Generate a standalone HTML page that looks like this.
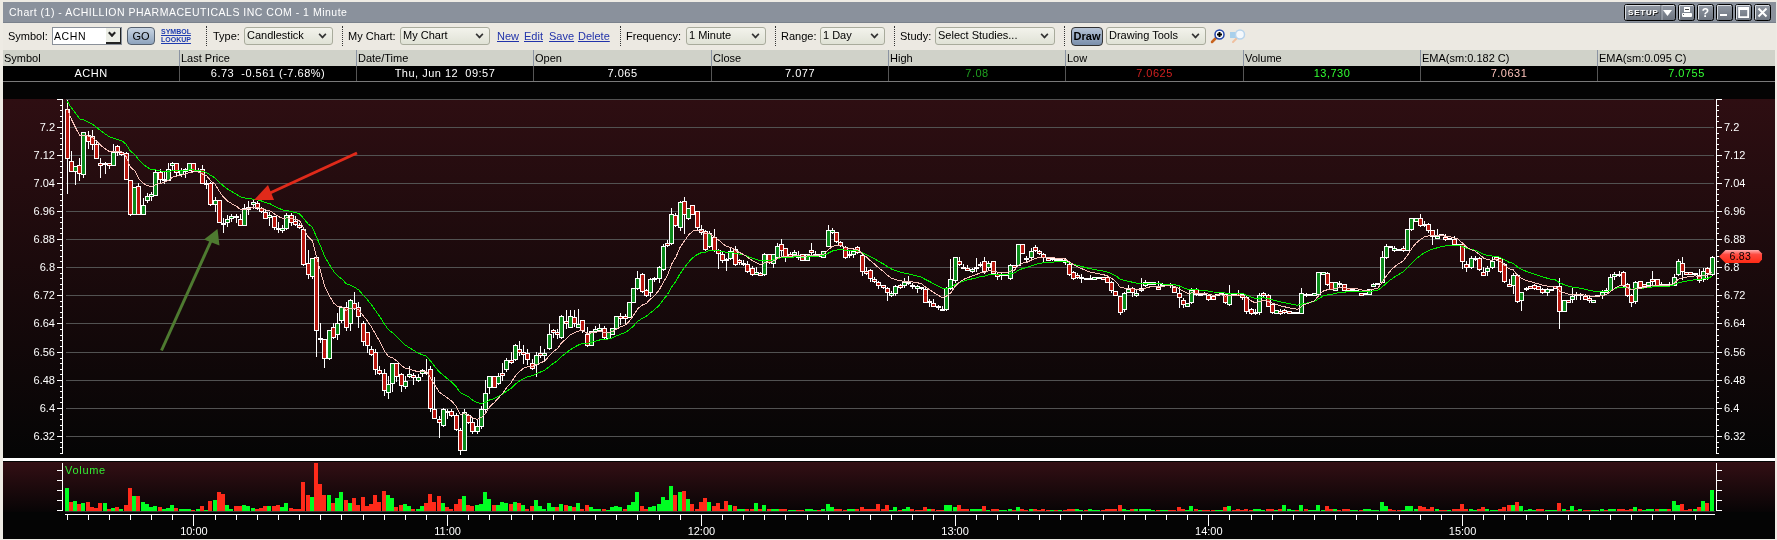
<!DOCTYPE html>
<html><head><meta charset="utf-8">
<style>
*{margin:0;padding:0;box-sizing:border-box}
html,body{width:1777px;height:540px;overflow:hidden;background:#eeebe4;font-family:"Liberation Sans", sans-serif;}
.abs{position:absolute}
#title{left:3px;top:2px;width:1773px;height:21px;background:#8a919c;color:#fff;font-size:10.5px;letter-spacing:0.5px;line-height:21px;padding-left:6px;white-space:nowrap;border-bottom:1px solid #7a818c}
#tb{left:3px;top:23px;width:1773px;height:27px;background:#ece9e2;font-size:11px;color:#000}
.lbl{position:absolute;top:0px;line-height:27px;white-space:nowrap}
.sel{position:absolute;top:4px;height:18px;border:1px solid #a9ab9c;border-radius:3px;background:linear-gradient(#f3f3ec,#e0e2d6);line-height:15px;padding-left:2px;white-space:nowrap}
.sel i{position:absolute;right:6px;top:3px;width:7px;height:7px;border-right:2px solid #333;border-bottom:2px solid #333;transform:rotate(45deg) scale(.8);transform-origin:center}
.sep{position:absolute;top:3px;height:20px;width:0;border-left:1px dotted #333}
.lnk{position:absolute;top:0;line-height:27px;color:#2233aa;text-decoration:underline;white-space:nowrap}
#hdr{left:3px;top:50px;width:1772px;height:16px;background:#d0d2c9;font-size:11px;}
#row{left:3px;top:66px;width:1772px;height:16px;background:#000;font-size:11px;color:#fff}
.hc{position:absolute;top:0;height:16px;border-left:1px solid #8a93a2;line-height:17px;padding-left:1px;white-space:nowrap}
.rc{position:absolute;top:0;height:15px;border-left:1px solid #555;line-height:15px;text-align:center;white-space:nowrap;letter-spacing:0.5px}
#root{position:absolute;left:0;top:0;width:1777px;height:540px;will-change:transform}
</style></head><body><div id="root">
<div class="abs" id="title">Chart (1) - ACHILLION PHARMACEUTICALS INC COM - 1 Minute</div>
<div class="abs" id="tb"><div class="lbl" style="left:5px">Symbol:</div><div class="abs" style="left:49px;top:4px;width:70px;height:18px;background:#fff;border:1px solid #8a9099;line-height:17px;padding-left:1px;font-size:10.5px;letter-spacing:0.6px">ACHN</div><div class="abs" style="left:103px;top:5px;width:15px;height:16px;background:#eceee6;border-bottom:2px solid #222;border-right:1px solid #222"><i style="position:absolute;left:2px;top:1px;width:8px;height:8px;border-right:3px solid #222;border-bottom:3px solid #222;transform:rotate(45deg) scale(.7)"></i></div><div class="abs" style="left:124px;top:4px;width:28px;height:18px;border:1px solid #55606e;border-radius:4px;background:linear-gradient(#c9d5e3,#8ea3bd);text-align:center;line-height:16px;font-size:11px">GO</div><div class="abs" style="left:158px;top:5px;font-size:7px;font-weight:bold;line-height:8px;color:#1d3bb0;text-decoration:underline">SYMBOL<br>LOOKUP</div><div class="sep" style="left:203px"></div><div class="sep" style="left:339px"></div><div class="sep" style="left:617px"></div><div class="sep" style="left:772px"></div><div class="sep" style="left:891px"></div><div class="sep" style="left:1061px"></div><div class="lbl" style="left:210px">Type:</div><div class="sel" style="left:241px;width:89px">Candlestick<i></i></div><div class="lbl" style="left:345px">My Chart:</div><div class="sel" style="left:397px;width:90px">My Chart<i></i></div><div class="lnk" style="left:494px">New</div><div class="lnk" style="left:521px">Edit</div><div class="lnk" style="left:546px">Save</div><div class="lnk" style="left:575px">Delete</div><div class="lbl" style="left:623px">Frequency:</div><div class="sel" style="left:683px;width:80px">1 Minute<i></i></div><div class="lbl" style="left:778px">Range:</div><div class="sel" style="left:817px;width:65px">1 Day<i></i></div><div class="lbl" style="left:897px">Study:</div><div class="sel" style="left:932px;width:120px">Select Studies...<i></i></div><div class="abs" style="left:1068px;top:4px;width:32px;height:19px;border:1px solid #333;border-radius:4px;background:linear-gradient(#b5c3d6,#7b8fab);text-align:center;line-height:17px;font-weight:bold;font-size:11px">Draw</div><div class="sel" style="left:1103px;width:100px">Drawing Tools<i></i></div></div>
<div class="abs" id="hdr"><div class="hc" style="left:0px;width:176px;border-left:none">Symbol</div><div class="hc" style="left:176px;width:177px;">Last Price</div><div class="hc" style="left:353px;width:177px;">Date/Time</div><div class="hc" style="left:530px;width:178px;">Open</div><div class="hc" style="left:708px;width:177px;">Close</div><div class="hc" style="left:885px;width:177px;">High</div><div class="hc" style="left:1062px;width:178px;">Low</div><div class="hc" style="left:1240px;width:177px;">Volume</div><div class="hc" style="left:1417px;width:177px;">EMA(sm:0.182 C)</div><div class="hc" style="left:1594px;width:178px;">EMA(sm:0.095 C)</div></div>
<div class="abs" id="row"><div class="rc" style="left:0px;width:176px;color:#fff;border-left:none">ACHN</div><div class="rc" style="left:176px;width:177px;color:#fff;">6.73&nbsp; -0.561 (-7.68%)</div><div class="rc" style="left:353px;width:177px;color:#fff;">Thu, Jun 12&nbsp; 09:57</div><div class="rc" style="left:530px;width:178px;color:#fff;">7.065</div><div class="rc" style="left:708px;width:177px;color:#fff;">7.077</div><div class="rc" style="left:885px;width:177px;color:#1fa01f;">7.08</div><div class="rc" style="left:1062px;width:178px;color:#d02020;">7.0625</div><div class="rc" style="left:1240px;width:177px;color:#33ff33;">13,730</div><div class="rc" style="left:1417px;width:177px;color:#ffc4bc;">7.0631</div><div class="rc" style="left:1594px;width:178px;color:#33ff33;">7.0755</div></div>
<div class="abs" style="left:3px;top:81px;width:1772px;height:1px;background:#7a7a7a"></div>
<div class="abs" style="left:3px;top:82px;width:1772px;height:17px;background:#000"></div>
<svg class="abs" style="left:0;top:0" width="1777" height="540" viewBox="0 0 1777 540" shape-rendering="crispEdges">
<defs><linearGradient id="g1" x1="0" y1="0" x2="0" y2="1"><stop offset="0" stop-color="#2e0e12"/><stop offset="1" stop-color="#050505"/></linearGradient><linearGradient id="g2" x1="0" y1="0" x2="0" y2="1"><stop offset="0" stop-color="#330f14"/><stop offset="1" stop-color="#070405"/></linearGradient></defs>
<rect x="3" y="82" width="1772" height="457" fill="#040404"/>
<rect x="3" y="99" width="1772" height="359" fill="url(#g1)"/>
<rect x="3" y="458" width="1772" height="3" fill="#fff"/>
<rect x="3" y="462" width="1772" height="50" fill="url(#g2)"/>
<rect x="66" y="99" width="1648" height="1" fill="#525252"/>
<rect x="66" y="127" width="1648" height="1" fill="#525252"/>
<rect x="66" y="155" width="1648" height="1" fill="#525252"/>
<rect x="66" y="183" width="1648" height="1" fill="#525252"/>
<rect x="66" y="211" width="1648" height="1" fill="#525252"/>
<rect x="66" y="239" width="1648" height="1" fill="#525252"/>
<rect x="66" y="267" width="1648" height="1" fill="#525252"/>
<rect x="66" y="295" width="1648" height="1" fill="#525252"/>
<rect x="66" y="323" width="1648" height="1" fill="#525252"/>
<rect x="66" y="352" width="1648" height="1" fill="#525252"/>
<rect x="66" y="380" width="1648" height="1" fill="#525252"/>
<rect x="66" y="408" width="1648" height="1" fill="#525252"/>
<rect x="66" y="436" width="1648" height="1" fill="#525252"/>
<rect x="62" y="99" width="1" height="355" fill="#fff"/>
<rect x="1716" y="99" width="1" height="355" fill="#fff"/>
<rect x="57" y="99" width="5" height="1" fill="#fff"/>
<rect x="1717" y="99" width="5" height="1" fill="#fff"/>
<rect x="60" y="105" width="2" height="1" fill="#fff"/>
<rect x="1717" y="105" width="2" height="1" fill="#fff"/>
<rect x="60" y="110" width="2" height="1" fill="#fff"/>
<rect x="1717" y="110" width="2" height="1" fill="#fff"/>
<rect x="60" y="116" width="2" height="1" fill="#fff"/>
<rect x="1717" y="116" width="2" height="1" fill="#fff"/>
<rect x="60" y="121" width="2" height="1" fill="#fff"/>
<rect x="1717" y="121" width="2" height="1" fill="#fff"/>
<rect x="57" y="127" width="5" height="1" fill="#fff"/>
<rect x="1717" y="127" width="5" height="1" fill="#fff"/>
<rect x="60" y="133" width="2" height="1" fill="#fff"/>
<rect x="1717" y="133" width="2" height="1" fill="#fff"/>
<rect x="60" y="138" width="2" height="1" fill="#fff"/>
<rect x="1717" y="138" width="2" height="1" fill="#fff"/>
<rect x="60" y="144" width="2" height="1" fill="#fff"/>
<rect x="1717" y="144" width="2" height="1" fill="#fff"/>
<rect x="60" y="149" width="2" height="1" fill="#fff"/>
<rect x="1717" y="149" width="2" height="1" fill="#fff"/>
<rect x="57" y="155" width="5" height="1" fill="#fff"/>
<rect x="1717" y="155" width="5" height="1" fill="#fff"/>
<rect x="60" y="161" width="2" height="1" fill="#fff"/>
<rect x="1717" y="161" width="2" height="1" fill="#fff"/>
<rect x="60" y="166" width="2" height="1" fill="#fff"/>
<rect x="1717" y="166" width="2" height="1" fill="#fff"/>
<rect x="60" y="172" width="2" height="1" fill="#fff"/>
<rect x="1717" y="172" width="2" height="1" fill="#fff"/>
<rect x="60" y="177" width="2" height="1" fill="#fff"/>
<rect x="1717" y="177" width="2" height="1" fill="#fff"/>
<rect x="57" y="183" width="5" height="1" fill="#fff"/>
<rect x="1717" y="183" width="5" height="1" fill="#fff"/>
<rect x="60" y="189" width="2" height="1" fill="#fff"/>
<rect x="1717" y="189" width="2" height="1" fill="#fff"/>
<rect x="60" y="194" width="2" height="1" fill="#fff"/>
<rect x="1717" y="194" width="2" height="1" fill="#fff"/>
<rect x="60" y="200" width="2" height="1" fill="#fff"/>
<rect x="1717" y="200" width="2" height="1" fill="#fff"/>
<rect x="60" y="205" width="2" height="1" fill="#fff"/>
<rect x="1717" y="205" width="2" height="1" fill="#fff"/>
<rect x="57" y="211" width="5" height="1" fill="#fff"/>
<rect x="1717" y="211" width="5" height="1" fill="#fff"/>
<rect x="60" y="217" width="2" height="1" fill="#fff"/>
<rect x="1717" y="217" width="2" height="1" fill="#fff"/>
<rect x="60" y="222" width="2" height="1" fill="#fff"/>
<rect x="1717" y="222" width="2" height="1" fill="#fff"/>
<rect x="60" y="228" width="2" height="1" fill="#fff"/>
<rect x="1717" y="228" width="2" height="1" fill="#fff"/>
<rect x="60" y="233" width="2" height="1" fill="#fff"/>
<rect x="1717" y="233" width="2" height="1" fill="#fff"/>
<rect x="57" y="239" width="5" height="1" fill="#fff"/>
<rect x="1717" y="239" width="5" height="1" fill="#fff"/>
<rect x="60" y="245" width="2" height="1" fill="#fff"/>
<rect x="1717" y="245" width="2" height="1" fill="#fff"/>
<rect x="60" y="250" width="2" height="1" fill="#fff"/>
<rect x="1717" y="250" width="2" height="1" fill="#fff"/>
<rect x="60" y="256" width="2" height="1" fill="#fff"/>
<rect x="1717" y="256" width="2" height="1" fill="#fff"/>
<rect x="60" y="261" width="2" height="1" fill="#fff"/>
<rect x="1717" y="261" width="2" height="1" fill="#fff"/>
<rect x="57" y="267" width="5" height="1" fill="#fff"/>
<rect x="1717" y="267" width="5" height="1" fill="#fff"/>
<rect x="60" y="273" width="2" height="1" fill="#fff"/>
<rect x="1717" y="273" width="2" height="1" fill="#fff"/>
<rect x="60" y="278" width="2" height="1" fill="#fff"/>
<rect x="1717" y="278" width="2" height="1" fill="#fff"/>
<rect x="60" y="284" width="2" height="1" fill="#fff"/>
<rect x="1717" y="284" width="2" height="1" fill="#fff"/>
<rect x="60" y="289" width="2" height="1" fill="#fff"/>
<rect x="1717" y="289" width="2" height="1" fill="#fff"/>
<rect x="57" y="295" width="5" height="1" fill="#fff"/>
<rect x="1717" y="295" width="5" height="1" fill="#fff"/>
<rect x="60" y="301" width="2" height="1" fill="#fff"/>
<rect x="1717" y="301" width="2" height="1" fill="#fff"/>
<rect x="60" y="306" width="2" height="1" fill="#fff"/>
<rect x="1717" y="306" width="2" height="1" fill="#fff"/>
<rect x="60" y="312" width="2" height="1" fill="#fff"/>
<rect x="1717" y="312" width="2" height="1" fill="#fff"/>
<rect x="60" y="317" width="2" height="1" fill="#fff"/>
<rect x="1717" y="317" width="2" height="1" fill="#fff"/>
<rect x="57" y="323" width="5" height="1" fill="#fff"/>
<rect x="1717" y="323" width="5" height="1" fill="#fff"/>
<rect x="60" y="329" width="2" height="1" fill="#fff"/>
<rect x="1717" y="329" width="2" height="1" fill="#fff"/>
<rect x="60" y="335" width="2" height="1" fill="#fff"/>
<rect x="1717" y="335" width="2" height="1" fill="#fff"/>
<rect x="60" y="340" width="2" height="1" fill="#fff"/>
<rect x="1717" y="340" width="2" height="1" fill="#fff"/>
<rect x="60" y="346" width="2" height="1" fill="#fff"/>
<rect x="1717" y="346" width="2" height="1" fill="#fff"/>
<rect x="57" y="352" width="5" height="1" fill="#fff"/>
<rect x="1717" y="352" width="5" height="1" fill="#fff"/>
<rect x="60" y="358" width="2" height="1" fill="#fff"/>
<rect x="1717" y="358" width="2" height="1" fill="#fff"/>
<rect x="60" y="363" width="2" height="1" fill="#fff"/>
<rect x="1717" y="363" width="2" height="1" fill="#fff"/>
<rect x="60" y="369" width="2" height="1" fill="#fff"/>
<rect x="1717" y="369" width="2" height="1" fill="#fff"/>
<rect x="60" y="374" width="2" height="1" fill="#fff"/>
<rect x="1717" y="374" width="2" height="1" fill="#fff"/>
<rect x="57" y="380" width="5" height="1" fill="#fff"/>
<rect x="1717" y="380" width="5" height="1" fill="#fff"/>
<rect x="60" y="386" width="2" height="1" fill="#fff"/>
<rect x="1717" y="386" width="2" height="1" fill="#fff"/>
<rect x="60" y="391" width="2" height="1" fill="#fff"/>
<rect x="1717" y="391" width="2" height="1" fill="#fff"/>
<rect x="60" y="397" width="2" height="1" fill="#fff"/>
<rect x="1717" y="397" width="2" height="1" fill="#fff"/>
<rect x="60" y="402" width="2" height="1" fill="#fff"/>
<rect x="1717" y="402" width="2" height="1" fill="#fff"/>
<rect x="57" y="408" width="5" height="1" fill="#fff"/>
<rect x="1717" y="408" width="5" height="1" fill="#fff"/>
<rect x="60" y="414" width="2" height="1" fill="#fff"/>
<rect x="1717" y="414" width="2" height="1" fill="#fff"/>
<rect x="60" y="419" width="2" height="1" fill="#fff"/>
<rect x="1717" y="419" width="2" height="1" fill="#fff"/>
<rect x="60" y="425" width="2" height="1" fill="#fff"/>
<rect x="1717" y="425" width="2" height="1" fill="#fff"/>
<rect x="60" y="430" width="2" height="1" fill="#fff"/>
<rect x="1717" y="430" width="2" height="1" fill="#fff"/>
<rect x="57" y="436" width="5" height="1" fill="#fff"/>
<rect x="1717" y="436" width="5" height="1" fill="#fff"/>
<rect x="60" y="442" width="2" height="1" fill="#fff"/>
<rect x="1717" y="442" width="2" height="1" fill="#fff"/>
<rect x="60" y="447" width="2" height="1" fill="#fff"/>
<rect x="1717" y="447" width="2" height="1" fill="#fff"/>
<rect x="60" y="453" width="2" height="1" fill="#fff"/>
<rect x="1717" y="453" width="2" height="1" fill="#fff"/>
<text x="55" y="131" text-anchor="end" fill="#fff" font-size="11" font-family="Liberation Sans">7.2</text>
<text x="1724" y="131" fill="#fff" font-size="11" font-family="Liberation Sans">7.2</text>
<text x="55" y="159" text-anchor="end" fill="#fff" font-size="11" font-family="Liberation Sans">7.12</text>
<text x="1724" y="159" fill="#fff" font-size="11" font-family="Liberation Sans">7.12</text>
<text x="55" y="187" text-anchor="end" fill="#fff" font-size="11" font-family="Liberation Sans">7.04</text>
<text x="1724" y="187" fill="#fff" font-size="11" font-family="Liberation Sans">7.04</text>
<text x="55" y="215" text-anchor="end" fill="#fff" font-size="11" font-family="Liberation Sans">6.96</text>
<text x="1724" y="215" fill="#fff" font-size="11" font-family="Liberation Sans">6.96</text>
<text x="55" y="243" text-anchor="end" fill="#fff" font-size="11" font-family="Liberation Sans">6.88</text>
<text x="1724" y="243" fill="#fff" font-size="11" font-family="Liberation Sans">6.88</text>
<text x="55" y="271" text-anchor="end" fill="#fff" font-size="11" font-family="Liberation Sans">6.8</text>
<text x="1724" y="271" fill="#fff" font-size="11" font-family="Liberation Sans">6.8</text>
<text x="55" y="299" text-anchor="end" fill="#fff" font-size="11" font-family="Liberation Sans">6.72</text>
<text x="1724" y="299" fill="#fff" font-size="11" font-family="Liberation Sans">6.72</text>
<text x="55" y="327" text-anchor="end" fill="#fff" font-size="11" font-family="Liberation Sans">6.64</text>
<text x="1724" y="327" fill="#fff" font-size="11" font-family="Liberation Sans">6.64</text>
<text x="55" y="356" text-anchor="end" fill="#fff" font-size="11" font-family="Liberation Sans">6.56</text>
<text x="1724" y="356" fill="#fff" font-size="11" font-family="Liberation Sans">6.56</text>
<text x="55" y="384" text-anchor="end" fill="#fff" font-size="11" font-family="Liberation Sans">6.48</text>
<text x="1724" y="384" fill="#fff" font-size="11" font-family="Liberation Sans">6.48</text>
<text x="55" y="412" text-anchor="end" fill="#fff" font-size="11" font-family="Liberation Sans">6.4</text>
<text x="1724" y="412" fill="#fff" font-size="11" font-family="Liberation Sans">6.4</text>
<text x="55" y="440" text-anchor="end" fill="#fff" font-size="11" font-family="Liberation Sans">6.32</text>
<text x="1724" y="440" fill="#fff" font-size="11" font-family="Liberation Sans">6.32</text>
<rect x="62" y="463" width="1" height="48" fill="#fff"/>
<rect x="1716" y="463" width="1" height="48" fill="#fff"/>
<rect x="57" y="470" width="5" height="1" fill="#fff"/>
<rect x="1717" y="470" width="5" height="1" fill="#fff"/>
<rect x="57" y="480" width="5" height="1" fill="#fff"/>
<rect x="1717" y="480" width="5" height="1" fill="#fff"/>
<rect x="57" y="490" width="5" height="1" fill="#fff"/>
<rect x="1717" y="490" width="5" height="1" fill="#fff"/>
<rect x="57" y="500" width="5" height="1" fill="#fff"/>
<rect x="1717" y="500" width="5" height="1" fill="#fff"/>
<rect x="57" y="510" width="5" height="1" fill="#fff"/>
<rect x="1717" y="510" width="5" height="1" fill="#fff"/>
<rect x="57" y="510" width="5" height="1" fill="#fff"/>
<text x="65" y="474" fill="#33ee33" font-size="11" letter-spacing="0.7" font-family="Liberation Sans">Volume</text>
<rect x="65" y="488" width="4" height="23" fill="#00ff22"/>
<rect x="69" y="502" width="4" height="9" fill="#ff2a1a"/>
<rect x="73" y="501" width="4" height="10" fill="#00ff22"/>
<rect x="77" y="504" width="4" height="7" fill="#ff2a1a"/>
<rect x="81" y="503" width="4" height="8" fill="#00ff22"/>
<rect x="86" y="502" width="4" height="9" fill="#ff2a1a"/>
<rect x="90" y="507" width="4" height="4" fill="#ff2a1a"/>
<rect x="94" y="508" width="4" height="3" fill="#ff2a1a"/>
<rect x="98" y="503" width="4" height="8" fill="#ff2a1a"/>
<rect x="103" y="503" width="4" height="8" fill="#00ff22"/>
<rect x="107" y="509" width="4" height="2" fill="#ff2a1a"/>
<rect x="111" y="508" width="4" height="3" fill="#00ff22"/>
<rect x="115" y="507" width="4" height="4" fill="#ff2a1a"/>
<rect x="119" y="509" width="4" height="2" fill="#00ff22"/>
<rect x="124" y="505" width="4" height="6" fill="#ff2a1a"/>
<rect x="128" y="488" width="4" height="23" fill="#ff2a1a"/>
<rect x="132" y="496" width="4" height="15" fill="#00ff22"/>
<rect x="136" y="496" width="4" height="15" fill="#ff2a1a"/>
<rect x="141" y="502" width="4" height="9" fill="#00ff22"/>
<rect x="145" y="504" width="4" height="7" fill="#00ff22"/>
<rect x="149" y="507" width="4" height="4" fill="#00ff22"/>
<rect x="153" y="506" width="4" height="5" fill="#00ff22"/>
<rect x="158" y="507" width="4" height="4" fill="#ff2a1a"/>
<rect x="162" y="509" width="4" height="2" fill="#00ff22"/>
<rect x="166" y="508" width="4" height="3" fill="#00ff22"/>
<rect x="170" y="505" width="4" height="6" fill="#00ff22"/>
<rect x="174" y="508" width="4" height="3" fill="#ff2a1a"/>
<rect x="179" y="509" width="4" height="2" fill="#00ff22"/>
<rect x="183" y="509" width="4" height="2" fill="#00ff22"/>
<rect x="187" y="509" width="4" height="2" fill="#00ff22"/>
<rect x="191" y="510" width="4" height="1" fill="#ff2a1a"/>
<rect x="196" y="509" width="4" height="2" fill="#00ff22"/>
<rect x="200" y="506" width="4" height="5" fill="#ff2a1a"/>
<rect x="204" y="510" width="4" height="1" fill="#00ff22"/>
<rect x="208" y="501" width="4" height="10" fill="#ff2a1a"/>
<rect x="213" y="500" width="4" height="11" fill="#00ff22"/>
<rect x="217" y="492" width="4" height="19" fill="#ff2a1a"/>
<rect x="221" y="494" width="4" height="17" fill="#ff2a1a"/>
<rect x="225" y="505" width="4" height="6" fill="#00ff22"/>
<rect x="229" y="509" width="4" height="2" fill="#00ff22"/>
<rect x="234" y="506" width="4" height="5" fill="#ff2a1a"/>
<rect x="238" y="506" width="4" height="5" fill="#ff2a1a"/>
<rect x="242" y="505" width="4" height="6" fill="#00ff22"/>
<rect x="246" y="506" width="4" height="5" fill="#00ff22"/>
<rect x="251" y="508" width="4" height="3" fill="#00ff22"/>
<rect x="255" y="509" width="4" height="2" fill="#ff2a1a"/>
<rect x="259" y="508" width="4" height="3" fill="#ff2a1a"/>
<rect x="263" y="506" width="4" height="5" fill="#ff2a1a"/>
<rect x="267" y="506" width="4" height="5" fill="#00ff22"/>
<rect x="272" y="506" width="4" height="5" fill="#ff2a1a"/>
<rect x="276" y="505" width="4" height="6" fill="#ff2a1a"/>
<rect x="280" y="507" width="4" height="4" fill="#00ff22"/>
<rect x="284" y="503" width="4" height="8" fill="#00ff22"/>
<rect x="289" y="508" width="4" height="3" fill="#ff2a1a"/>
<rect x="293" y="509" width="4" height="2" fill="#ff2a1a"/>
<rect x="297" y="509" width="4" height="2" fill="#ff2a1a"/>
<rect x="301" y="482" width="4" height="29" fill="#ff2a1a"/>
<rect x="306" y="495" width="4" height="16" fill="#ff2a1a"/>
<rect x="310" y="497" width="4" height="14" fill="#00ff22"/>
<rect x="314" y="463" width="4" height="48" fill="#ff2a1a"/>
<rect x="318" y="484" width="4" height="27" fill="#ff2a1a"/>
<rect x="322" y="495" width="4" height="16" fill="#ff2a1a"/>
<rect x="327" y="495" width="4" height="16" fill="#00ff22"/>
<rect x="331" y="503" width="4" height="8" fill="#ff2a1a"/>
<rect x="335" y="498" width="4" height="13" fill="#00ff22"/>
<rect x="339" y="492" width="4" height="19" fill="#00ff22"/>
<rect x="344" y="500" width="4" height="11" fill="#ff2a1a"/>
<rect x="348" y="503" width="4" height="8" fill="#00ff22"/>
<rect x="352" y="498" width="4" height="13" fill="#ff2a1a"/>
<rect x="356" y="505" width="4" height="6" fill="#ff2a1a"/>
<rect x="361" y="497" width="4" height="14" fill="#ff2a1a"/>
<rect x="365" y="506" width="4" height="5" fill="#ff2a1a"/>
<rect x="369" y="504" width="4" height="7" fill="#ff2a1a"/>
<rect x="373" y="495" width="4" height="16" fill="#ff2a1a"/>
<rect x="377" y="502" width="4" height="9" fill="#ff2a1a"/>
<rect x="382" y="491" width="4" height="20" fill="#ff2a1a"/>
<rect x="386" y="495" width="4" height="16" fill="#00ff22"/>
<rect x="390" y="498" width="4" height="13" fill="#00ff22"/>
<rect x="394" y="507" width="4" height="4" fill="#ff2a1a"/>
<rect x="399" y="505" width="4" height="6" fill="#ff2a1a"/>
<rect x="403" y="504" width="4" height="7" fill="#00ff22"/>
<rect x="407" y="506" width="4" height="5" fill="#00ff22"/>
<rect x="411" y="509" width="4" height="2" fill="#ff2a1a"/>
<rect x="416" y="509" width="4" height="2" fill="#00ff22"/>
<rect x="420" y="506" width="4" height="5" fill="#00ff22"/>
<rect x="424" y="503" width="4" height="8" fill="#ff2a1a"/>
<rect x="428" y="494" width="4" height="17" fill="#ff2a1a"/>
<rect x="432" y="502" width="4" height="9" fill="#ff2a1a"/>
<rect x="437" y="496" width="4" height="15" fill="#ff2a1a"/>
<rect x="441" y="503" width="4" height="8" fill="#00ff22"/>
<rect x="445" y="507" width="4" height="4" fill="#ff2a1a"/>
<rect x="449" y="509" width="4" height="2" fill="#ff2a1a"/>
<rect x="454" y="504" width="4" height="7" fill="#ff2a1a"/>
<rect x="458" y="499" width="4" height="12" fill="#ff2a1a"/>
<rect x="462" y="496" width="4" height="15" fill="#00ff22"/>
<rect x="466" y="505" width="4" height="6" fill="#ff2a1a"/>
<rect x="470" y="506" width="4" height="5" fill="#ff2a1a"/>
<rect x="475" y="505" width="4" height="6" fill="#00ff22"/>
<rect x="479" y="504" width="4" height="7" fill="#00ff22"/>
<rect x="483" y="492" width="4" height="19" fill="#00ff22"/>
<rect x="487" y="499" width="4" height="12" fill="#00ff22"/>
<rect x="492" y="505" width="4" height="6" fill="#ff2a1a"/>
<rect x="496" y="505" width="4" height="6" fill="#00ff22"/>
<rect x="500" y="502" width="4" height="9" fill="#00ff22"/>
<rect x="504" y="503" width="4" height="8" fill="#00ff22"/>
<rect x="509" y="504" width="4" height="7" fill="#ff2a1a"/>
<rect x="513" y="502" width="4" height="9" fill="#00ff22"/>
<rect x="517" y="503" width="4" height="8" fill="#ff2a1a"/>
<rect x="521" y="505" width="4" height="6" fill="#00ff22"/>
<rect x="525" y="509" width="4" height="2" fill="#ff2a1a"/>
<rect x="530" y="506" width="4" height="5" fill="#ff2a1a"/>
<rect x="534" y="500" width="4" height="11" fill="#00ff22"/>
<rect x="538" y="506" width="4" height="5" fill="#00ff22"/>
<rect x="542" y="509" width="4" height="2" fill="#00ff22"/>
<rect x="547" y="503" width="4" height="8" fill="#00ff22"/>
<rect x="551" y="507" width="4" height="4" fill="#00ff22"/>
<rect x="555" y="507" width="4" height="4" fill="#ff2a1a"/>
<rect x="559" y="504" width="4" height="7" fill="#00ff22"/>
<rect x="564" y="505" width="4" height="6" fill="#ff2a1a"/>
<rect x="568" y="506" width="4" height="5" fill="#00ff22"/>
<rect x="572" y="507" width="4" height="4" fill="#ff2a1a"/>
<rect x="576" y="503" width="4" height="8" fill="#00ff22"/>
<rect x="580" y="509" width="4" height="2" fill="#ff2a1a"/>
<rect x="585" y="505" width="4" height="6" fill="#ff2a1a"/>
<rect x="589" y="507" width="4" height="4" fill="#00ff22"/>
<rect x="593" y="509" width="4" height="2" fill="#00ff22"/>
<rect x="597" y="509" width="4" height="2" fill="#00ff22"/>
<rect x="602" y="509" width="4" height="2" fill="#ff2a1a"/>
<rect x="606" y="510" width="4" height="1" fill="#00ff22"/>
<rect x="610" y="507" width="4" height="4" fill="#00ff22"/>
<rect x="614" y="506" width="4" height="5" fill="#00ff22"/>
<rect x="618" y="507" width="4" height="4" fill="#00ff22"/>
<rect x="623" y="509" width="4" height="2" fill="#ff2a1a"/>
<rect x="627" y="505" width="4" height="6" fill="#00ff22"/>
<rect x="631" y="502" width="4" height="9" fill="#00ff22"/>
<rect x="635" y="492" width="4" height="19" fill="#00ff22"/>
<rect x="640" y="506" width="4" height="5" fill="#ff2a1a"/>
<rect x="644" y="509" width="4" height="2" fill="#ff2a1a"/>
<rect x="648" y="507" width="4" height="4" fill="#00ff22"/>
<rect x="652" y="506" width="4" height="5" fill="#00ff22"/>
<rect x="657" y="504" width="4" height="7" fill="#00ff22"/>
<rect x="661" y="497" width="4" height="14" fill="#00ff22"/>
<rect x="665" y="500" width="4" height="11" fill="#00ff22"/>
<rect x="669" y="486" width="4" height="25" fill="#00ff22"/>
<rect x="673" y="495" width="4" height="16" fill="#ff2a1a"/>
<rect x="678" y="492" width="4" height="19" fill="#00ff22"/>
<rect x="682" y="491" width="4" height="20" fill="#ff2a1a"/>
<rect x="686" y="499" width="4" height="12" fill="#00ff22"/>
<rect x="690" y="504" width="4" height="7" fill="#ff2a1a"/>
<rect x="695" y="509" width="4" height="2" fill="#ff2a1a"/>
<rect x="699" y="502" width="4" height="9" fill="#ff2a1a"/>
<rect x="703" y="498" width="4" height="13" fill="#ff2a1a"/>
<rect x="707" y="502" width="4" height="9" fill="#00ff22"/>
<rect x="712" y="506" width="4" height="5" fill="#ff2a1a"/>
<rect x="716" y="503" width="4" height="8" fill="#ff2a1a"/>
<rect x="720" y="509" width="4" height="2" fill="#ff2a1a"/>
<rect x="724" y="501" width="4" height="10" fill="#ff2a1a"/>
<rect x="728" y="505" width="4" height="6" fill="#00ff22"/>
<rect x="733" y="506" width="4" height="5" fill="#ff2a1a"/>
<rect x="737" y="509" width="4" height="2" fill="#00ff22"/>
<rect x="741" y="509" width="4" height="2" fill="#00ff22"/>
<rect x="745" y="509" width="4" height="2" fill="#ff2a1a"/>
<rect x="750" y="509" width="4" height="2" fill="#ff2a1a"/>
<rect x="754" y="503" width="4" height="8" fill="#00ff22"/>
<rect x="758" y="509" width="4" height="2" fill="#ff2a1a"/>
<rect x="762" y="505" width="4" height="6" fill="#00ff22"/>
<rect x="767" y="509" width="4" height="2" fill="#ff2a1a"/>
<rect x="771" y="509" width="4" height="2" fill="#00ff22"/>
<rect x="775" y="509" width="4" height="2" fill="#00ff22"/>
<rect x="779" y="509" width="4" height="2" fill="#ff2a1a"/>
<rect x="783" y="509" width="4" height="2" fill="#ff2a1a"/>
<rect x="788" y="510" width="4" height="1" fill="#00ff22"/>
<rect x="792" y="510" width="4" height="1" fill="#00ff22"/>
<rect x="796" y="510" width="4" height="1" fill="#ff2a1a"/>
<rect x="800" y="510" width="4" height="1" fill="#ff2a1a"/>
<rect x="805" y="509" width="4" height="2" fill="#00ff22"/>
<rect x="809" y="509" width="4" height="2" fill="#00ff22"/>
<rect x="813" y="510" width="4" height="1" fill="#00ff22"/>
<rect x="817" y="510" width="4" height="1" fill="#ff2a1a"/>
<rect x="821" y="509" width="4" height="2" fill="#00ff22"/>
<rect x="826" y="504" width="4" height="7" fill="#00ff22"/>
<rect x="830" y="507" width="4" height="4" fill="#00ff22"/>
<rect x="834" y="509" width="4" height="2" fill="#ff2a1a"/>
<rect x="838" y="509" width="4" height="2" fill="#ff2a1a"/>
<rect x="843" y="510" width="4" height="1" fill="#ff2a1a"/>
<rect x="847" y="509" width="4" height="2" fill="#00ff22"/>
<rect x="851" y="509" width="4" height="2" fill="#00ff22"/>
<rect x="855" y="509" width="4" height="2" fill="#ff2a1a"/>
<rect x="860" y="507" width="4" height="4" fill="#ff2a1a"/>
<rect x="864" y="509" width="4" height="2" fill="#ff2a1a"/>
<rect x="868" y="509" width="4" height="2" fill="#ff2a1a"/>
<rect x="872" y="509" width="4" height="2" fill="#ff2a1a"/>
<rect x="876" y="504" width="4" height="7" fill="#ff2a1a"/>
<rect x="881" y="509" width="4" height="2" fill="#ff2a1a"/>
<rect x="885" y="505" width="4" height="6" fill="#ff2a1a"/>
<rect x="889" y="510" width="4" height="1" fill="#00ff22"/>
<rect x="893" y="507" width="4" height="4" fill="#00ff22"/>
<rect x="898" y="510" width="4" height="1" fill="#ff2a1a"/>
<rect x="902" y="509" width="4" height="2" fill="#00ff22"/>
<rect x="906" y="507" width="4" height="4" fill="#00ff22"/>
<rect x="910" y="509" width="4" height="2" fill="#ff2a1a"/>
<rect x="915" y="510" width="4" height="1" fill="#ff2a1a"/>
<rect x="919" y="510" width="4" height="1" fill="#ff2a1a"/>
<rect x="923" y="507" width="4" height="4" fill="#ff2a1a"/>
<rect x="927" y="509" width="4" height="2" fill="#00ff22"/>
<rect x="931" y="509" width="4" height="2" fill="#ff2a1a"/>
<rect x="936" y="510" width="4" height="1" fill="#ff2a1a"/>
<rect x="940" y="510" width="4" height="1" fill="#ff2a1a"/>
<rect x="944" y="505" width="4" height="6" fill="#00ff22"/>
<rect x="948" y="505" width="4" height="6" fill="#00ff22"/>
<rect x="953" y="507" width="4" height="4" fill="#00ff22"/>
<rect x="957" y="505" width="4" height="6" fill="#ff2a1a"/>
<rect x="961" y="509" width="4" height="2" fill="#ff2a1a"/>
<rect x="965" y="509" width="4" height="2" fill="#ff2a1a"/>
<rect x="970" y="509" width="4" height="2" fill="#00ff22"/>
<rect x="974" y="509" width="4" height="2" fill="#00ff22"/>
<rect x="978" y="509" width="4" height="2" fill="#00ff22"/>
<rect x="982" y="506" width="4" height="5" fill="#ff2a1a"/>
<rect x="986" y="510" width="4" height="1" fill="#00ff22"/>
<rect x="991" y="509" width="4" height="2" fill="#ff2a1a"/>
<rect x="995" y="509" width="4" height="2" fill="#ff2a1a"/>
<rect x="999" y="510" width="4" height="1" fill="#00ff22"/>
<rect x="1003" y="510" width="4" height="1" fill="#00ff22"/>
<rect x="1008" y="509" width="4" height="2" fill="#00ff22"/>
<rect x="1012" y="510" width="4" height="1" fill="#ff2a1a"/>
<rect x="1016" y="507" width="4" height="4" fill="#00ff22"/>
<rect x="1020" y="509" width="4" height="2" fill="#ff2a1a"/>
<rect x="1024" y="510" width="4" height="1" fill="#ff2a1a"/>
<rect x="1029" y="509" width="4" height="2" fill="#00ff22"/>
<rect x="1033" y="509" width="4" height="2" fill="#ff2a1a"/>
<rect x="1037" y="510" width="4" height="1" fill="#ff2a1a"/>
<rect x="1041" y="509" width="4" height="2" fill="#ff2a1a"/>
<rect x="1046" y="510" width="4" height="1" fill="#ff2a1a"/>
<rect x="1050" y="510" width="4" height="1" fill="#00ff22"/>
<rect x="1054" y="510" width="4" height="1" fill="#ff2a1a"/>
<rect x="1058" y="510" width="4" height="1" fill="#00ff22"/>
<rect x="1063" y="510" width="4" height="1" fill="#ff2a1a"/>
<rect x="1067" y="509" width="4" height="2" fill="#ff2a1a"/>
<rect x="1071" y="509" width="4" height="2" fill="#ff2a1a"/>
<rect x="1075" y="509" width="4" height="2" fill="#00ff22"/>
<rect x="1079" y="510" width="4" height="1" fill="#00ff22"/>
<rect x="1084" y="510" width="4" height="1" fill="#ff2a1a"/>
<rect x="1088" y="509" width="4" height="2" fill="#00ff22"/>
<rect x="1092" y="510" width="4" height="1" fill="#00ff22"/>
<rect x="1096" y="510" width="4" height="1" fill="#00ff22"/>
<rect x="1101" y="510" width="4" height="1" fill="#ff2a1a"/>
<rect x="1105" y="509" width="4" height="2" fill="#ff2a1a"/>
<rect x="1109" y="509" width="4" height="2" fill="#ff2a1a"/>
<rect x="1113" y="509" width="4" height="2" fill="#ff2a1a"/>
<rect x="1118" y="505" width="4" height="6" fill="#ff2a1a"/>
<rect x="1122" y="509" width="4" height="2" fill="#00ff22"/>
<rect x="1126" y="510" width="4" height="1" fill="#00ff22"/>
<rect x="1130" y="509" width="4" height="2" fill="#ff2a1a"/>
<rect x="1134" y="509" width="4" height="2" fill="#00ff22"/>
<rect x="1139" y="509" width="4" height="2" fill="#00ff22"/>
<rect x="1143" y="509" width="4" height="2" fill="#00ff22"/>
<rect x="1147" y="509" width="4" height="2" fill="#00ff22"/>
<rect x="1151" y="510" width="4" height="1" fill="#00ff22"/>
<rect x="1156" y="510" width="4" height="1" fill="#ff2a1a"/>
<rect x="1160" y="510" width="4" height="1" fill="#00ff22"/>
<rect x="1164" y="510" width="4" height="1" fill="#00ff22"/>
<rect x="1168" y="510" width="4" height="1" fill="#ff2a1a"/>
<rect x="1172" y="510" width="4" height="1" fill="#ff2a1a"/>
<rect x="1177" y="507" width="4" height="4" fill="#ff2a1a"/>
<rect x="1181" y="509" width="4" height="2" fill="#ff2a1a"/>
<rect x="1185" y="510" width="4" height="1" fill="#00ff22"/>
<rect x="1189" y="506" width="4" height="5" fill="#00ff22"/>
<rect x="1194" y="509" width="4" height="2" fill="#ff2a1a"/>
<rect x="1198" y="510" width="4" height="1" fill="#00ff22"/>
<rect x="1202" y="510" width="4" height="1" fill="#ff2a1a"/>
<rect x="1206" y="510" width="4" height="1" fill="#ff2a1a"/>
<rect x="1211" y="510" width="4" height="1" fill="#ff2a1a"/>
<rect x="1215" y="510" width="4" height="1" fill="#00ff22"/>
<rect x="1219" y="510" width="4" height="1" fill="#00ff22"/>
<rect x="1223" y="507" width="4" height="4" fill="#ff2a1a"/>
<rect x="1227" y="506" width="4" height="5" fill="#00ff22"/>
<rect x="1232" y="510" width="4" height="1" fill="#ff2a1a"/>
<rect x="1236" y="509" width="4" height="2" fill="#ff2a1a"/>
<rect x="1240" y="510" width="4" height="1" fill="#ff2a1a"/>
<rect x="1244" y="509" width="4" height="2" fill="#ff2a1a"/>
<rect x="1249" y="510" width="4" height="1" fill="#ff2a1a"/>
<rect x="1253" y="509" width="4" height="2" fill="#00ff22"/>
<rect x="1257" y="509" width="4" height="2" fill="#00ff22"/>
<rect x="1261" y="510" width="4" height="1" fill="#00ff22"/>
<rect x="1266" y="509" width="4" height="2" fill="#ff2a1a"/>
<rect x="1270" y="509" width="4" height="2" fill="#ff2a1a"/>
<rect x="1274" y="510" width="4" height="1" fill="#00ff22"/>
<rect x="1278" y="509" width="4" height="2" fill="#ff2a1a"/>
<rect x="1282" y="505" width="4" height="6" fill="#00ff22"/>
<rect x="1287" y="509" width="4" height="2" fill="#00ff22"/>
<rect x="1291" y="510" width="4" height="1" fill="#00ff22"/>
<rect x="1295" y="510" width="4" height="1" fill="#ff2a1a"/>
<rect x="1299" y="505" width="4" height="6" fill="#00ff22"/>
<rect x="1304" y="509" width="4" height="2" fill="#ff2a1a"/>
<rect x="1308" y="510" width="4" height="1" fill="#00ff22"/>
<rect x="1312" y="510" width="4" height="1" fill="#00ff22"/>
<rect x="1316" y="505" width="4" height="6" fill="#00ff22"/>
<rect x="1321" y="510" width="4" height="1" fill="#00ff22"/>
<rect x="1325" y="506" width="4" height="5" fill="#ff2a1a"/>
<rect x="1329" y="509" width="4" height="2" fill="#ff2a1a"/>
<rect x="1333" y="509" width="4" height="2" fill="#00ff22"/>
<rect x="1337" y="510" width="4" height="1" fill="#ff2a1a"/>
<rect x="1342" y="509" width="4" height="2" fill="#ff2a1a"/>
<rect x="1346" y="509" width="4" height="2" fill="#ff2a1a"/>
<rect x="1350" y="510" width="4" height="1" fill="#00ff22"/>
<rect x="1354" y="510" width="4" height="1" fill="#00ff22"/>
<rect x="1359" y="510" width="4" height="1" fill="#ff2a1a"/>
<rect x="1363" y="509" width="4" height="2" fill="#00ff22"/>
<rect x="1367" y="509" width="4" height="2" fill="#00ff22"/>
<rect x="1371" y="510" width="4" height="1" fill="#00ff22"/>
<rect x="1375" y="510" width="4" height="1" fill="#00ff22"/>
<rect x="1380" y="502" width="4" height="9" fill="#00ff22"/>
<rect x="1384" y="506" width="4" height="5" fill="#00ff22"/>
<rect x="1388" y="509" width="4" height="2" fill="#ff2a1a"/>
<rect x="1392" y="510" width="4" height="1" fill="#ff2a1a"/>
<rect x="1397" y="510" width="4" height="1" fill="#ff2a1a"/>
<rect x="1401" y="510" width="4" height="1" fill="#00ff22"/>
<rect x="1405" y="506" width="4" height="5" fill="#00ff22"/>
<rect x="1409" y="506" width="4" height="5" fill="#00ff22"/>
<rect x="1414" y="509" width="4" height="2" fill="#00ff22"/>
<rect x="1418" y="506" width="4" height="5" fill="#ff2a1a"/>
<rect x="1422" y="507" width="4" height="4" fill="#ff2a1a"/>
<rect x="1426" y="509" width="4" height="2" fill="#ff2a1a"/>
<rect x="1430" y="507" width="4" height="4" fill="#ff2a1a"/>
<rect x="1435" y="509" width="4" height="2" fill="#00ff22"/>
<rect x="1439" y="510" width="4" height="1" fill="#ff2a1a"/>
<rect x="1443" y="510" width="4" height="1" fill="#ff2a1a"/>
<rect x="1447" y="510" width="4" height="1" fill="#00ff22"/>
<rect x="1452" y="509" width="4" height="2" fill="#ff2a1a"/>
<rect x="1456" y="509" width="4" height="2" fill="#ff2a1a"/>
<rect x="1460" y="504" width="4" height="7" fill="#ff2a1a"/>
<rect x="1464" y="509" width="4" height="2" fill="#ff2a1a"/>
<rect x="1469" y="509" width="4" height="2" fill="#00ff22"/>
<rect x="1473" y="510" width="4" height="1" fill="#00ff22"/>
<rect x="1477" y="509" width="4" height="2" fill="#ff2a1a"/>
<rect x="1481" y="507" width="4" height="4" fill="#ff2a1a"/>
<rect x="1485" y="509" width="4" height="2" fill="#00ff22"/>
<rect x="1490" y="510" width="4" height="1" fill="#00ff22"/>
<rect x="1494" y="510" width="4" height="1" fill="#00ff22"/>
<rect x="1498" y="509" width="4" height="2" fill="#ff2a1a"/>
<rect x="1502" y="507" width="4" height="4" fill="#ff2a1a"/>
<rect x="1507" y="505" width="4" height="6" fill="#ff2a1a"/>
<rect x="1511" y="505" width="4" height="6" fill="#00ff22"/>
<rect x="1515" y="502" width="4" height="9" fill="#ff2a1a"/>
<rect x="1519" y="506" width="4" height="5" fill="#00ff22"/>
<rect x="1524" y="510" width="4" height="1" fill="#00ff22"/>
<rect x="1528" y="509" width="4" height="2" fill="#00ff22"/>
<rect x="1532" y="510" width="4" height="1" fill="#00ff22"/>
<rect x="1536" y="509" width="4" height="2" fill="#ff2a1a"/>
<rect x="1540" y="509" width="4" height="2" fill="#ff2a1a"/>
<rect x="1545" y="510" width="4" height="1" fill="#00ff22"/>
<rect x="1549" y="510" width="4" height="1" fill="#00ff22"/>
<rect x="1553" y="510" width="4" height="1" fill="#00ff22"/>
<rect x="1557" y="503" width="4" height="8" fill="#ff2a1a"/>
<rect x="1562" y="509" width="4" height="2" fill="#00ff22"/>
<rect x="1566" y="510" width="4" height="1" fill="#ff2a1a"/>
<rect x="1570" y="506" width="4" height="5" fill="#00ff22"/>
<rect x="1574" y="510" width="4" height="1" fill="#ff2a1a"/>
<rect x="1578" y="509" width="4" height="2" fill="#00ff22"/>
<rect x="1583" y="510" width="4" height="1" fill="#ff2a1a"/>
<rect x="1587" y="510" width="4" height="1" fill="#ff2a1a"/>
<rect x="1591" y="510" width="4" height="1" fill="#00ff22"/>
<rect x="1595" y="510" width="4" height="1" fill="#00ff22"/>
<rect x="1600" y="509" width="4" height="2" fill="#00ff22"/>
<rect x="1604" y="510" width="4" height="1" fill="#ff2a1a"/>
<rect x="1608" y="509" width="4" height="2" fill="#00ff22"/>
<rect x="1612" y="509" width="4" height="2" fill="#00ff22"/>
<rect x="1617" y="509" width="4" height="2" fill="#ff2a1a"/>
<rect x="1621" y="509" width="4" height="2" fill="#ff2a1a"/>
<rect x="1625" y="510" width="4" height="1" fill="#ff2a1a"/>
<rect x="1629" y="509" width="4" height="2" fill="#ff2a1a"/>
<rect x="1633" y="507" width="4" height="4" fill="#00ff22"/>
<rect x="1638" y="509" width="4" height="2" fill="#ff2a1a"/>
<rect x="1642" y="510" width="4" height="1" fill="#00ff22"/>
<rect x="1646" y="509" width="4" height="2" fill="#00ff22"/>
<rect x="1650" y="509" width="4" height="2" fill="#00ff22"/>
<rect x="1655" y="509" width="4" height="2" fill="#ff2a1a"/>
<rect x="1659" y="509" width="4" height="2" fill="#00ff22"/>
<rect x="1663" y="509" width="4" height="2" fill="#00ff22"/>
<rect x="1667" y="509" width="4" height="2" fill="#ff2a1a"/>
<rect x="1672" y="501" width="4" height="10" fill="#00ff22"/>
<rect x="1676" y="505" width="4" height="6" fill="#00ff22"/>
<rect x="1680" y="504" width="4" height="7" fill="#ff2a1a"/>
<rect x="1684" y="510" width="4" height="1" fill="#ff2a1a"/>
<rect x="1688" y="509" width="4" height="2" fill="#ff2a1a"/>
<rect x="1693" y="509" width="4" height="2" fill="#00ff22"/>
<rect x="1697" y="507" width="4" height="4" fill="#ff2a1a"/>
<rect x="1701" y="501" width="4" height="10" fill="#00ff22"/>
<rect x="1705" y="503" width="4" height="8" fill="#ff2a1a"/>
<rect x="1710" y="490" width="4" height="21" fill="#00ff22"/>
<rect x="65" y="511" width="1650" height="1" fill="#3a3a3a"/>
<rect x="65" y="514" width="1650" height="1" fill="#fff"/>
<rect x="67" y="515" width="1" height="5" fill="#fff"/>
<rect x="88" y="515" width="1" height="5" fill="#fff"/>
<rect x="109" y="515" width="1" height="5" fill="#fff"/>
<rect x="130" y="515" width="1" height="5" fill="#fff"/>
<rect x="151" y="515" width="1" height="5" fill="#fff"/>
<rect x="172" y="515" width="1" height="5" fill="#fff"/>
<rect x="193" y="515" width="1" height="11" fill="#fff"/>
<rect x="215" y="515" width="1" height="5" fill="#fff"/>
<rect x="236" y="515" width="1" height="5" fill="#fff"/>
<rect x="257" y="515" width="1" height="5" fill="#fff"/>
<rect x="278" y="515" width="1" height="5" fill="#fff"/>
<rect x="299" y="515" width="1" height="5" fill="#fff"/>
<rect x="320" y="515" width="1" height="5" fill="#fff"/>
<rect x="341" y="515" width="1" height="5" fill="#fff"/>
<rect x="363" y="515" width="1" height="5" fill="#fff"/>
<rect x="384" y="515" width="1" height="5" fill="#fff"/>
<rect x="405" y="515" width="1" height="5" fill="#fff"/>
<rect x="426" y="515" width="1" height="5" fill="#fff"/>
<rect x="447" y="515" width="1" height="11" fill="#fff"/>
<rect x="468" y="515" width="1" height="5" fill="#fff"/>
<rect x="489" y="515" width="1" height="5" fill="#fff"/>
<rect x="511" y="515" width="1" height="5" fill="#fff"/>
<rect x="532" y="515" width="1" height="5" fill="#fff"/>
<rect x="553" y="515" width="1" height="5" fill="#fff"/>
<rect x="574" y="515" width="1" height="5" fill="#fff"/>
<rect x="595" y="515" width="1" height="5" fill="#fff"/>
<rect x="616" y="515" width="1" height="5" fill="#fff"/>
<rect x="637" y="515" width="1" height="5" fill="#fff"/>
<rect x="659" y="515" width="1" height="5" fill="#fff"/>
<rect x="680" y="515" width="1" height="5" fill="#fff"/>
<rect x="701" y="515" width="1" height="11" fill="#fff"/>
<rect x="722" y="515" width="1" height="5" fill="#fff"/>
<rect x="743" y="515" width="1" height="5" fill="#fff"/>
<rect x="764" y="515" width="1" height="5" fill="#fff"/>
<rect x="785" y="515" width="1" height="5" fill="#fff"/>
<rect x="807" y="515" width="1" height="5" fill="#fff"/>
<rect x="828" y="515" width="1" height="5" fill="#fff"/>
<rect x="849" y="515" width="1" height="5" fill="#fff"/>
<rect x="870" y="515" width="1" height="5" fill="#fff"/>
<rect x="891" y="515" width="1" height="5" fill="#fff"/>
<rect x="912" y="515" width="1" height="5" fill="#fff"/>
<rect x="933" y="515" width="1" height="5" fill="#fff"/>
<rect x="955" y="515" width="1" height="11" fill="#fff"/>
<rect x="976" y="515" width="1" height="5" fill="#fff"/>
<rect x="997" y="515" width="1" height="5" fill="#fff"/>
<rect x="1018" y="515" width="1" height="5" fill="#fff"/>
<rect x="1039" y="515" width="1" height="5" fill="#fff"/>
<rect x="1060" y="515" width="1" height="5" fill="#fff"/>
<rect x="1081" y="515" width="1" height="5" fill="#fff"/>
<rect x="1103" y="515" width="1" height="5" fill="#fff"/>
<rect x="1124" y="515" width="1" height="5" fill="#fff"/>
<rect x="1145" y="515" width="1" height="5" fill="#fff"/>
<rect x="1166" y="515" width="1" height="5" fill="#fff"/>
<rect x="1187" y="515" width="1" height="5" fill="#fff"/>
<rect x="1208" y="515" width="1" height="11" fill="#fff"/>
<rect x="1229" y="515" width="1" height="5" fill="#fff"/>
<rect x="1251" y="515" width="1" height="5" fill="#fff"/>
<rect x="1272" y="515" width="1" height="5" fill="#fff"/>
<rect x="1293" y="515" width="1" height="5" fill="#fff"/>
<rect x="1314" y="515" width="1" height="5" fill="#fff"/>
<rect x="1335" y="515" width="1" height="5" fill="#fff"/>
<rect x="1356" y="515" width="1" height="5" fill="#fff"/>
<rect x="1377" y="515" width="1" height="5" fill="#fff"/>
<rect x="1399" y="515" width="1" height="5" fill="#fff"/>
<rect x="1420" y="515" width="1" height="5" fill="#fff"/>
<rect x="1441" y="515" width="1" height="5" fill="#fff"/>
<rect x="1462" y="515" width="1" height="11" fill="#fff"/>
<rect x="1483" y="515" width="1" height="5" fill="#fff"/>
<rect x="1504" y="515" width="1" height="5" fill="#fff"/>
<rect x="1526" y="515" width="1" height="5" fill="#fff"/>
<rect x="1547" y="515" width="1" height="5" fill="#fff"/>
<rect x="1568" y="515" width="1" height="5" fill="#fff"/>
<rect x="1589" y="515" width="1" height="5" fill="#fff"/>
<rect x="1610" y="515" width="1" height="5" fill="#fff"/>
<rect x="1631" y="515" width="1" height="5" fill="#fff"/>
<rect x="1652" y="515" width="1" height="5" fill="#fff"/>
<rect x="1674" y="515" width="1" height="5" fill="#fff"/>
<rect x="1695" y="515" width="1" height="5" fill="#fff"/>
<text x="193.9" y="535" text-anchor="middle" fill="#fff" font-size="11" font-family="Liberation Sans">10:00</text>
<text x="447.6" y="535" text-anchor="middle" fill="#fff" font-size="11" font-family="Liberation Sans">11:00</text>
<text x="701.4" y="535" text-anchor="middle" fill="#fff" font-size="11" font-family="Liberation Sans">12:00</text>
<text x="955.1" y="535" text-anchor="middle" fill="#fff" font-size="11" font-family="Liberation Sans">13:00</text>
<text x="1208.8" y="535" text-anchor="middle" fill="#fff" font-size="11" font-family="Liberation Sans">14:00</text>
<text x="1462.6" y="535" text-anchor="middle" fill="#fff" font-size="11" font-family="Liberation Sans">15:00</text>
<rect x="67" y="100" width="1" height="94" fill="#fff"/>
<rect x="65" y="109" width="5" height="50" fill="#fff"/>
<rect x="66" y="110" width="3" height="48" fill="#b8170f"/>
<rect x="71" y="151" width="1" height="21" fill="#fff"/>
<rect x="69" y="161" width="5" height="11" fill="#fff"/>
<rect x="70" y="162" width="3" height="9" fill="#b8170f"/>
<rect x="75" y="166" width="1" height="19" fill="#fff"/>
<rect x="73" y="166" width="5" height="6" fill="#fff"/>
<rect x="74" y="167" width="3" height="4" fill="#0a8a1a"/>
<rect x="79" y="158" width="1" height="23" fill="#fff"/>
<rect x="77" y="165" width="5" height="9" fill="#fff"/>
<rect x="78" y="166" width="3" height="7" fill="#b8170f"/>
<rect x="83" y="132" width="1" height="46" fill="#fff"/>
<rect x="81" y="132" width="5" height="43" fill="#fff"/>
<rect x="82" y="133" width="3" height="41" fill="#0a8a1a"/>
<rect x="88" y="131" width="1" height="18" fill="#fff"/>
<rect x="86" y="135" width="5" height="7" fill="#fff"/>
<rect x="87" y="136" width="3" height="5" fill="#b8170f"/>
<rect x="92" y="130" width="1" height="20" fill="#fff"/>
<rect x="90" y="136" width="5" height="9" fill="#fff"/>
<rect x="91" y="137" width="3" height="7" fill="#b8170f"/>
<rect x="96" y="140" width="1" height="19" fill="#fff"/>
<rect x="94" y="144" width="5" height="15" fill="#fff"/>
<rect x="95" y="145" width="3" height="13" fill="#b8170f"/>
<rect x="100" y="158" width="1" height="20" fill="#fff"/>
<rect x="98" y="163" width="5" height="3" fill="#fff"/>
<rect x="99" y="164" width="3" height="1" fill="#b8170f"/>
<rect x="105" y="162" width="1" height="12" fill="#fff"/>
<rect x="103" y="163" width="5" height="2" fill="#fff"/>
<rect x="109" y="163" width="1" height="6" fill="#fff"/>
<rect x="107" y="163" width="5" height="3" fill="#fff"/>
<rect x="108" y="164" width="3" height="1" fill="#b8170f"/>
<rect x="113" y="144" width="1" height="22" fill="#fff"/>
<rect x="111" y="152" width="5" height="14" fill="#fff"/>
<rect x="112" y="153" width="3" height="12" fill="#0a8a1a"/>
<rect x="117" y="145" width="1" height="11" fill="#fff"/>
<rect x="115" y="146" width="5" height="7" fill="#fff"/>
<rect x="116" y="147" width="3" height="5" fill="#b8170f"/>
<rect x="121" y="152" width="1" height="4" fill="#fff"/>
<rect x="119" y="152" width="5" height="3" fill="#fff"/>
<rect x="120" y="153" width="3" height="1" fill="#b8170f"/>
<rect x="126" y="152" width="1" height="28" fill="#fff"/>
<rect x="124" y="153" width="5" height="27" fill="#fff"/>
<rect x="125" y="154" width="3" height="25" fill="#b8170f"/>
<rect x="130" y="180" width="1" height="36" fill="#fff"/>
<rect x="128" y="180" width="5" height="35" fill="#fff"/>
<rect x="129" y="181" width="3" height="33" fill="#b8170f"/>
<rect x="134" y="187" width="1" height="28" fill="#fff"/>
<rect x="132" y="187" width="5" height="28" fill="#fff"/>
<rect x="133" y="188" width="3" height="26" fill="#0a8a1a"/>
<rect x="138" y="183" width="1" height="32" fill="#fff"/>
<rect x="136" y="186" width="5" height="29" fill="#fff"/>
<rect x="137" y="187" width="3" height="27" fill="#b8170f"/>
<rect x="143" y="198" width="1" height="17" fill="#fff"/>
<rect x="141" y="205" width="5" height="10" fill="#fff"/>
<rect x="142" y="206" width="3" height="8" fill="#0a8a1a"/>
<rect x="147" y="193" width="1" height="10" fill="#fff"/>
<rect x="145" y="196" width="5" height="5" fill="#fff"/>
<rect x="146" y="197" width="3" height="3" fill="#0a8a1a"/>
<rect x="151" y="192" width="1" height="9" fill="#fff"/>
<rect x="149" y="194" width="5" height="3" fill="#fff"/>
<rect x="150" y="195" width="3" height="1" fill="#0a8a1a"/>
<rect x="155" y="169" width="1" height="27" fill="#fff"/>
<rect x="153" y="172" width="5" height="24" fill="#fff"/>
<rect x="154" y="173" width="3" height="22" fill="#0a8a1a"/>
<rect x="160" y="169" width="1" height="14" fill="#fff"/>
<rect x="158" y="172" width="5" height="8" fill="#fff"/>
<rect x="159" y="173" width="3" height="6" fill="#b8170f"/>
<rect x="164" y="172" width="1" height="12" fill="#fff"/>
<rect x="162" y="179" width="5" height="2" fill="#fff"/>
<rect x="168" y="163" width="1" height="18" fill="#fff"/>
<rect x="166" y="169" width="5" height="12" fill="#fff"/>
<rect x="167" y="170" width="3" height="10" fill="#0a8a1a"/>
<rect x="172" y="162" width="1" height="8" fill="#fff"/>
<rect x="170" y="163" width="5" height="3" fill="#fff"/>
<rect x="171" y="164" width="3" height="1" fill="#0a8a1a"/>
<rect x="176" y="163" width="1" height="13" fill="#fff"/>
<rect x="174" y="163" width="5" height="10" fill="#fff"/>
<rect x="175" y="164" width="3" height="8" fill="#b8170f"/>
<rect x="181" y="168" width="1" height="9" fill="#fff"/>
<rect x="179" y="170" width="5" height="5" fill="#fff"/>
<rect x="180" y="171" width="3" height="3" fill="#0a8a1a"/>
<rect x="185" y="168" width="1" height="10" fill="#fff"/>
<rect x="183" y="169" width="5" height="3" fill="#fff"/>
<rect x="184" y="170" width="3" height="1" fill="#b8170f"/>
<rect x="189" y="163" width="1" height="8" fill="#fff"/>
<rect x="187" y="163" width="5" height="8" fill="#fff"/>
<rect x="188" y="164" width="3" height="6" fill="#0a8a1a"/>
<rect x="193" y="163" width="1" height="9" fill="#fff"/>
<rect x="191" y="163" width="5" height="9" fill="#fff"/>
<rect x="192" y="164" width="3" height="7" fill="#b8170f"/>
<rect x="198" y="168" width="1" height="5" fill="#fff"/>
<rect x="196" y="170" width="5" height="2" fill="#fff"/>
<rect x="202" y="165" width="1" height="19" fill="#fff"/>
<rect x="200" y="169" width="5" height="15" fill="#fff"/>
<rect x="201" y="170" width="3" height="13" fill="#b8170f"/>
<rect x="206" y="180" width="1" height="9" fill="#fff"/>
<rect x="204" y="183" width="5" height="2" fill="#fff"/>
<rect x="210" y="182" width="1" height="24" fill="#fff"/>
<rect x="208" y="183" width="5" height="22" fill="#fff"/>
<rect x="209" y="184" width="3" height="20" fill="#b8170f"/>
<rect x="215" y="197" width="1" height="15" fill="#fff"/>
<rect x="213" y="200" width="5" height="5" fill="#fff"/>
<rect x="214" y="201" width="3" height="3" fill="#0a8a1a"/>
<rect x="219" y="200" width="1" height="23" fill="#fff"/>
<rect x="217" y="200" width="5" height="23" fill="#fff"/>
<rect x="218" y="201" width="3" height="21" fill="#b8170f"/>
<rect x="223" y="218" width="1" height="15" fill="#fff"/>
<rect x="221" y="223" width="5" height="2" fill="#fff"/>
<rect x="227" y="215" width="1" height="12" fill="#fff"/>
<rect x="225" y="219" width="5" height="4" fill="#fff"/>
<rect x="226" y="220" width="3" height="2" fill="#0a8a1a"/>
<rect x="231" y="214" width="1" height="8" fill="#fff"/>
<rect x="229" y="216" width="5" height="3" fill="#fff"/>
<rect x="230" y="217" width="3" height="1" fill="#0a8a1a"/>
<rect x="236" y="214" width="1" height="9" fill="#fff"/>
<rect x="234" y="216" width="5" height="2" fill="#fff"/>
<rect x="240" y="214" width="1" height="12" fill="#fff"/>
<rect x="238" y="219" width="5" height="7" fill="#fff"/>
<rect x="239" y="220" width="3" height="5" fill="#b8170f"/>
<rect x="244" y="204" width="1" height="22" fill="#fff"/>
<rect x="242" y="208" width="5" height="18" fill="#fff"/>
<rect x="243" y="209" width="3" height="16" fill="#0a8a1a"/>
<rect x="248" y="201" width="1" height="14" fill="#fff"/>
<rect x="246" y="207" width="5" height="3" fill="#fff"/>
<rect x="247" y="208" width="3" height="1" fill="#0a8a1a"/>
<rect x="253" y="200" width="1" height="9" fill="#fff"/>
<rect x="251" y="202" width="5" height="3" fill="#fff"/>
<rect x="252" y="203" width="3" height="1" fill="#0a8a1a"/>
<rect x="257" y="201" width="1" height="9" fill="#fff"/>
<rect x="255" y="203" width="5" height="6" fill="#fff"/>
<rect x="256" y="204" width="3" height="4" fill="#b8170f"/>
<rect x="261" y="207" width="1" height="6" fill="#fff"/>
<rect x="259" y="208" width="5" height="4" fill="#fff"/>
<rect x="260" y="209" width="3" height="2" fill="#b8170f"/>
<rect x="265" y="210" width="1" height="9" fill="#fff"/>
<rect x="263" y="212" width="5" height="7" fill="#fff"/>
<rect x="264" y="213" width="3" height="5" fill="#b8170f"/>
<rect x="269" y="212" width="1" height="14" fill="#fff"/>
<rect x="267" y="215" width="5" height="3" fill="#fff"/>
<rect x="268" y="216" width="3" height="1" fill="#0a8a1a"/>
<rect x="274" y="216" width="1" height="14" fill="#fff"/>
<rect x="272" y="216" width="5" height="12" fill="#fff"/>
<rect x="273" y="217" width="3" height="10" fill="#b8170f"/>
<rect x="278" y="222" width="1" height="11" fill="#fff"/>
<rect x="276" y="228" width="5" height="2" fill="#fff"/>
<rect x="282" y="225" width="1" height="8" fill="#fff"/>
<rect x="280" y="228" width="5" height="3" fill="#fff"/>
<rect x="281" y="229" width="3" height="1" fill="#0a8a1a"/>
<rect x="286" y="213" width="1" height="17" fill="#fff"/>
<rect x="284" y="215" width="5" height="14" fill="#fff"/>
<rect x="285" y="216" width="3" height="12" fill="#0a8a1a"/>
<rect x="291" y="213" width="1" height="13" fill="#fff"/>
<rect x="289" y="215" width="5" height="8" fill="#fff"/>
<rect x="290" y="216" width="3" height="6" fill="#b8170f"/>
<rect x="295" y="216" width="1" height="10" fill="#fff"/>
<rect x="293" y="221" width="5" height="4" fill="#fff"/>
<rect x="294" y="222" width="3" height="2" fill="#b8170f"/>
<rect x="299" y="223" width="1" height="6" fill="#fff"/>
<rect x="297" y="225" width="5" height="3" fill="#fff"/>
<rect x="298" y="226" width="3" height="1" fill="#b8170f"/>
<rect x="303" y="229" width="1" height="37" fill="#fff"/>
<rect x="301" y="229" width="5" height="36" fill="#fff"/>
<rect x="302" y="230" width="3" height="34" fill="#b8170f"/>
<rect x="308" y="250" width="1" height="29" fill="#fff"/>
<rect x="306" y="263" width="5" height="12" fill="#fff"/>
<rect x="307" y="264" width="3" height="10" fill="#b8170f"/>
<rect x="312" y="258" width="1" height="21" fill="#fff"/>
<rect x="310" y="258" width="5" height="19" fill="#fff"/>
<rect x="311" y="259" width="3" height="17" fill="#0a8a1a"/>
<rect x="316" y="257" width="1" height="100" fill="#fff"/>
<rect x="314" y="257" width="5" height="74" fill="#fff"/>
<rect x="315" y="258" width="3" height="72" fill="#b8170f"/>
<rect x="320" y="323" width="1" height="20" fill="#fff"/>
<rect x="318" y="338" width="5" height="2" fill="#fff"/>
<rect x="324" y="339" width="1" height="29" fill="#fff"/>
<rect x="322" y="339" width="5" height="20" fill="#fff"/>
<rect x="323" y="340" width="3" height="18" fill="#b8170f"/>
<rect x="329" y="330" width="1" height="30" fill="#fff"/>
<rect x="327" y="330" width="5" height="29" fill="#fff"/>
<rect x="328" y="331" width="3" height="27" fill="#0a8a1a"/>
<rect x="333" y="323" width="1" height="16" fill="#fff"/>
<rect x="331" y="327" width="5" height="11" fill="#fff"/>
<rect x="332" y="328" width="3" height="9" fill="#b8170f"/>
<rect x="337" y="313" width="1" height="27" fill="#fff"/>
<rect x="335" y="323" width="5" height="12" fill="#fff"/>
<rect x="336" y="324" width="3" height="10" fill="#0a8a1a"/>
<rect x="341" y="306" width="1" height="17" fill="#fff"/>
<rect x="339" y="307" width="5" height="14" fill="#fff"/>
<rect x="340" y="308" width="3" height="12" fill="#0a8a1a"/>
<rect x="346" y="302" width="1" height="29" fill="#fff"/>
<rect x="344" y="307" width="5" height="21" fill="#fff"/>
<rect x="345" y="308" width="3" height="19" fill="#b8170f"/>
<rect x="350" y="299" width="1" height="32" fill="#fff"/>
<rect x="348" y="300" width="5" height="24" fill="#fff"/>
<rect x="349" y="301" width="3" height="22" fill="#0a8a1a"/>
<rect x="354" y="292" width="1" height="18" fill="#fff"/>
<rect x="352" y="303" width="5" height="6" fill="#fff"/>
<rect x="353" y="304" width="3" height="4" fill="#b8170f"/>
<rect x="358" y="302" width="1" height="26" fill="#fff"/>
<rect x="356" y="307" width="5" height="10" fill="#fff"/>
<rect x="357" y="308" width="3" height="8" fill="#b8170f"/>
<rect x="363" y="321" width="1" height="25" fill="#fff"/>
<rect x="361" y="323" width="5" height="19" fill="#fff"/>
<rect x="362" y="324" width="3" height="17" fill="#b8170f"/>
<rect x="367" y="332" width="1" height="21" fill="#fff"/>
<rect x="365" y="332" width="5" height="14" fill="#fff"/>
<rect x="366" y="333" width="3" height="12" fill="#b8170f"/>
<rect x="371" y="346" width="1" height="10" fill="#fff"/>
<rect x="369" y="349" width="5" height="6" fill="#fff"/>
<rect x="370" y="350" width="3" height="4" fill="#b8170f"/>
<rect x="375" y="349" width="1" height="26" fill="#fff"/>
<rect x="373" y="352" width="5" height="18" fill="#fff"/>
<rect x="374" y="353" width="3" height="16" fill="#b8170f"/>
<rect x="379" y="366" width="1" height="9" fill="#fff"/>
<rect x="377" y="370" width="5" height="4" fill="#fff"/>
<rect x="378" y="371" width="3" height="2" fill="#b8170f"/>
<rect x="384" y="369" width="1" height="27" fill="#fff"/>
<rect x="382" y="373" width="5" height="18" fill="#fff"/>
<rect x="383" y="374" width="3" height="16" fill="#b8170f"/>
<rect x="388" y="376" width="1" height="23" fill="#fff"/>
<rect x="386" y="384" width="5" height="9" fill="#fff"/>
<rect x="387" y="385" width="3" height="7" fill="#0a8a1a"/>
<rect x="392" y="363" width="1" height="29" fill="#fff"/>
<rect x="390" y="363" width="5" height="21" fill="#fff"/>
<rect x="391" y="364" width="3" height="19" fill="#0a8a1a"/>
<rect x="396" y="363" width="1" height="19" fill="#fff"/>
<rect x="394" y="363" width="5" height="14" fill="#fff"/>
<rect x="395" y="364" width="3" height="12" fill="#b8170f"/>
<rect x="401" y="373" width="1" height="19" fill="#fff"/>
<rect x="399" y="374" width="5" height="12" fill="#fff"/>
<rect x="400" y="375" width="3" height="10" fill="#b8170f"/>
<rect x="405" y="376" width="1" height="13" fill="#fff"/>
<rect x="403" y="381" width="5" height="6" fill="#fff"/>
<rect x="404" y="382" width="3" height="4" fill="#0a8a1a"/>
<rect x="409" y="366" width="1" height="12" fill="#fff"/>
<rect x="407" y="374" width="5" height="3" fill="#fff"/>
<rect x="408" y="375" width="3" height="1" fill="#0a8a1a"/>
<rect x="413" y="373" width="1" height="12" fill="#fff"/>
<rect x="411" y="375" width="5" height="3" fill="#fff"/>
<rect x="412" y="376" width="3" height="1" fill="#b8170f"/>
<rect x="418" y="374" width="1" height="8" fill="#fff"/>
<rect x="416" y="377" width="5" height="4" fill="#fff"/>
<rect x="417" y="378" width="3" height="2" fill="#0a8a1a"/>
<rect x="422" y="369" width="1" height="8" fill="#fff"/>
<rect x="420" y="370" width="5" height="4" fill="#fff"/>
<rect x="421" y="371" width="3" height="2" fill="#0a8a1a"/>
<rect x="426" y="359" width="1" height="16" fill="#fff"/>
<rect x="424" y="372" width="5" height="2" fill="#fff"/>
<rect x="430" y="366" width="1" height="46" fill="#fff"/>
<rect x="428" y="369" width="5" height="40" fill="#fff"/>
<rect x="429" y="370" width="3" height="38" fill="#b8170f"/>
<rect x="434" y="377" width="1" height="42" fill="#fff"/>
<rect x="432" y="409" width="5" height="10" fill="#fff"/>
<rect x="433" y="410" width="3" height="8" fill="#b8170f"/>
<rect x="439" y="416" width="1" height="22" fill="#fff"/>
<rect x="437" y="419" width="5" height="4" fill="#fff"/>
<rect x="438" y="420" width="3" height="2" fill="#b8170f"/>
<rect x="443" y="408" width="1" height="19" fill="#fff"/>
<rect x="441" y="409" width="5" height="17" fill="#fff"/>
<rect x="442" y="410" width="3" height="15" fill="#0a8a1a"/>
<rect x="447" y="409" width="1" height="10" fill="#fff"/>
<rect x="445" y="411" width="5" height="2" fill="#fff"/>
<rect x="451" y="409" width="1" height="8" fill="#fff"/>
<rect x="449" y="411" width="5" height="5" fill="#fff"/>
<rect x="450" y="412" width="3" height="3" fill="#b8170f"/>
<rect x="456" y="413" width="1" height="18" fill="#fff"/>
<rect x="454" y="415" width="5" height="15" fill="#fff"/>
<rect x="455" y="416" width="3" height="13" fill="#b8170f"/>
<rect x="460" y="428" width="1" height="27" fill="#fff"/>
<rect x="458" y="430" width="5" height="21" fill="#fff"/>
<rect x="459" y="431" width="3" height="19" fill="#b8170f"/>
<rect x="464" y="409" width="1" height="42" fill="#fff"/>
<rect x="462" y="412" width="5" height="39" fill="#fff"/>
<rect x="463" y="413" width="3" height="37" fill="#0a8a1a"/>
<rect x="468" y="414" width="1" height="10" fill="#fff"/>
<rect x="466" y="415" width="5" height="8" fill="#fff"/>
<rect x="467" y="416" width="3" height="6" fill="#b8170f"/>
<rect x="472" y="418" width="1" height="16" fill="#fff"/>
<rect x="470" y="422" width="5" height="10" fill="#fff"/>
<rect x="471" y="423" width="3" height="8" fill="#b8170f"/>
<rect x="477" y="420" width="1" height="14" fill="#fff"/>
<rect x="475" y="426" width="5" height="6" fill="#fff"/>
<rect x="476" y="427" width="3" height="4" fill="#0a8a1a"/>
<rect x="481" y="406" width="1" height="23" fill="#fff"/>
<rect x="479" y="409" width="5" height="18" fill="#fff"/>
<rect x="480" y="410" width="3" height="16" fill="#0a8a1a"/>
<rect x="485" y="380" width="1" height="32" fill="#fff"/>
<rect x="483" y="393" width="5" height="17" fill="#fff"/>
<rect x="484" y="394" width="3" height="15" fill="#0a8a1a"/>
<rect x="489" y="376" width="1" height="18" fill="#fff"/>
<rect x="487" y="376" width="5" height="12" fill="#fff"/>
<rect x="488" y="377" width="3" height="10" fill="#0a8a1a"/>
<rect x="494" y="376" width="1" height="12" fill="#fff"/>
<rect x="492" y="376" width="5" height="12" fill="#fff"/>
<rect x="493" y="377" width="3" height="10" fill="#b8170f"/>
<rect x="498" y="373" width="1" height="12" fill="#fff"/>
<rect x="496" y="376" width="5" height="8" fill="#fff"/>
<rect x="497" y="377" width="3" height="6" fill="#0a8a1a"/>
<rect x="502" y="363" width="1" height="18" fill="#fff"/>
<rect x="500" y="373" width="5" height="3" fill="#fff"/>
<rect x="501" y="374" width="3" height="1" fill="#b8170f"/>
<rect x="506" y="358" width="1" height="14" fill="#fff"/>
<rect x="504" y="360" width="5" height="10" fill="#fff"/>
<rect x="505" y="361" width="3" height="8" fill="#0a8a1a"/>
<rect x="511" y="352" width="1" height="12" fill="#fff"/>
<rect x="509" y="360" width="5" height="3" fill="#fff"/>
<rect x="510" y="361" width="3" height="1" fill="#b8170f"/>
<rect x="515" y="344" width="1" height="17" fill="#fff"/>
<rect x="513" y="345" width="5" height="15" fill="#fff"/>
<rect x="514" y="346" width="3" height="13" fill="#0a8a1a"/>
<rect x="519" y="341" width="1" height="15" fill="#fff"/>
<rect x="517" y="349" width="5" height="4" fill="#fff"/>
<rect x="518" y="350" width="3" height="2" fill="#b8170f"/>
<rect x="523" y="345" width="1" height="19" fill="#fff"/>
<rect x="521" y="352" width="5" height="3" fill="#fff"/>
<rect x="522" y="353" width="3" height="1" fill="#b8170f"/>
<rect x="527" y="349" width="1" height="16" fill="#fff"/>
<rect x="525" y="353" width="5" height="7" fill="#fff"/>
<rect x="526" y="354" width="3" height="5" fill="#b8170f"/>
<rect x="532" y="359" width="1" height="11" fill="#fff"/>
<rect x="530" y="363" width="5" height="6" fill="#fff"/>
<rect x="531" y="364" width="3" height="4" fill="#b8170f"/>
<rect x="536" y="352" width="1" height="25" fill="#fff"/>
<rect x="534" y="355" width="5" height="10" fill="#fff"/>
<rect x="535" y="356" width="3" height="8" fill="#0a8a1a"/>
<rect x="540" y="346" width="1" height="12" fill="#fff"/>
<rect x="538" y="353" width="5" height="3" fill="#fff"/>
<rect x="539" y="354" width="3" height="1" fill="#b8170f"/>
<rect x="544" y="349" width="1" height="13" fill="#fff"/>
<rect x="542" y="353" width="5" height="3" fill="#fff"/>
<rect x="543" y="354" width="3" height="1" fill="#0a8a1a"/>
<rect x="549" y="324" width="1" height="26" fill="#fff"/>
<rect x="547" y="334" width="5" height="15" fill="#fff"/>
<rect x="548" y="335" width="3" height="13" fill="#0a8a1a"/>
<rect x="553" y="329" width="1" height="9" fill="#fff"/>
<rect x="551" y="330" width="5" height="3" fill="#fff"/>
<rect x="552" y="331" width="3" height="1" fill="#b8170f"/>
<rect x="557" y="329" width="1" height="10" fill="#fff"/>
<rect x="555" y="332" width="5" height="3" fill="#fff"/>
<rect x="556" y="333" width="3" height="1" fill="#b8170f"/>
<rect x="561" y="315" width="1" height="24" fill="#fff"/>
<rect x="559" y="316" width="5" height="22" fill="#fff"/>
<rect x="560" y="317" width="3" height="20" fill="#0a8a1a"/>
<rect x="566" y="310" width="1" height="19" fill="#fff"/>
<rect x="564" y="321" width="5" height="3" fill="#fff"/>
<rect x="565" y="322" width="3" height="1" fill="#b8170f"/>
<rect x="570" y="310" width="1" height="18" fill="#fff"/>
<rect x="568" y="316" width="5" height="12" fill="#fff"/>
<rect x="569" y="317" width="3" height="10" fill="#0a8a1a"/>
<rect x="574" y="310" width="1" height="17" fill="#fff"/>
<rect x="572" y="317" width="5" height="7" fill="#fff"/>
<rect x="573" y="318" width="3" height="5" fill="#b8170f"/>
<rect x="578" y="309" width="1" height="19" fill="#fff"/>
<rect x="576" y="324" width="5" height="4" fill="#fff"/>
<rect x="577" y="325" width="3" height="2" fill="#0a8a1a"/>
<rect x="582" y="320" width="1" height="13" fill="#fff"/>
<rect x="580" y="320" width="5" height="11" fill="#fff"/>
<rect x="581" y="321" width="3" height="9" fill="#b8170f"/>
<rect x="587" y="327" width="1" height="20" fill="#fff"/>
<rect x="585" y="334" width="5" height="12" fill="#fff"/>
<rect x="586" y="335" width="3" height="10" fill="#b8170f"/>
<rect x="591" y="331" width="1" height="15" fill="#fff"/>
<rect x="589" y="331" width="5" height="15" fill="#fff"/>
<rect x="590" y="332" width="3" height="13" fill="#0a8a1a"/>
<rect x="595" y="326" width="1" height="7" fill="#fff"/>
<rect x="593" y="329" width="5" height="3" fill="#fff"/>
<rect x="594" y="330" width="3" height="1" fill="#0a8a1a"/>
<rect x="599" y="324" width="1" height="8" fill="#fff"/>
<rect x="597" y="328" width="5" height="3" fill="#fff"/>
<rect x="598" y="329" width="3" height="1" fill="#0a8a1a"/>
<rect x="604" y="326" width="1" height="13" fill="#fff"/>
<rect x="602" y="328" width="5" height="10" fill="#fff"/>
<rect x="603" y="329" width="3" height="8" fill="#b8170f"/>
<rect x="608" y="332" width="1" height="7" fill="#fff"/>
<rect x="606" y="332" width="5" height="7" fill="#fff"/>
<rect x="607" y="333" width="3" height="5" fill="#0a8a1a"/>
<rect x="612" y="328" width="1" height="7" fill="#fff"/>
<rect x="610" y="328" width="5" height="7" fill="#fff"/>
<rect x="611" y="329" width="3" height="5" fill="#0a8a1a"/>
<rect x="616" y="316" width="1" height="13" fill="#fff"/>
<rect x="614" y="316" width="5" height="13" fill="#fff"/>
<rect x="615" y="317" width="3" height="11" fill="#0a8a1a"/>
<rect x="620" y="313" width="1" height="12" fill="#fff"/>
<rect x="618" y="316" width="5" height="3" fill="#fff"/>
<rect x="619" y="317" width="3" height="1" fill="#b8170f"/>
<rect x="625" y="314" width="1" height="10" fill="#fff"/>
<rect x="623" y="316" width="5" height="3" fill="#fff"/>
<rect x="624" y="317" width="3" height="1" fill="#b8170f"/>
<rect x="629" y="302" width="1" height="16" fill="#fff"/>
<rect x="627" y="302" width="5" height="16" fill="#fff"/>
<rect x="628" y="303" width="3" height="14" fill="#0a8a1a"/>
<rect x="633" y="288" width="1" height="15" fill="#fff"/>
<rect x="631" y="288" width="5" height="15" fill="#fff"/>
<rect x="632" y="289" width="3" height="13" fill="#0a8a1a"/>
<rect x="637" y="271" width="1" height="19" fill="#fff"/>
<rect x="635" y="278" width="5" height="11" fill="#fff"/>
<rect x="636" y="279" width="3" height="9" fill="#0a8a1a"/>
<rect x="642" y="273" width="1" height="20" fill="#fff"/>
<rect x="640" y="274" width="5" height="18" fill="#fff"/>
<rect x="641" y="275" width="3" height="16" fill="#b8170f"/>
<rect x="646" y="289" width="1" height="8" fill="#fff"/>
<rect x="644" y="290" width="5" height="6" fill="#fff"/>
<rect x="645" y="291" width="3" height="4" fill="#b8170f"/>
<rect x="650" y="278" width="1" height="19" fill="#fff"/>
<rect x="648" y="279" width="5" height="14" fill="#fff"/>
<rect x="649" y="280" width="3" height="12" fill="#0a8a1a"/>
<rect x="654" y="277" width="1" height="5" fill="#fff"/>
<rect x="652" y="278" width="5" height="2" fill="#fff"/>
<rect x="659" y="266" width="1" height="17" fill="#fff"/>
<rect x="657" y="267" width="5" height="12" fill="#fff"/>
<rect x="658" y="268" width="3" height="10" fill="#0a8a1a"/>
<rect x="663" y="244" width="1" height="27" fill="#fff"/>
<rect x="661" y="246" width="5" height="24" fill="#fff"/>
<rect x="662" y="247" width="3" height="22" fill="#0a8a1a"/>
<rect x="667" y="240" width="1" height="7" fill="#fff"/>
<rect x="665" y="243" width="5" height="3" fill="#fff"/>
<rect x="666" y="244" width="3" height="1" fill="#b8170f"/>
<rect x="671" y="208" width="1" height="37" fill="#fff"/>
<rect x="669" y="214" width="5" height="30" fill="#fff"/>
<rect x="670" y="215" width="3" height="28" fill="#0a8a1a"/>
<rect x="675" y="213" width="1" height="14" fill="#fff"/>
<rect x="673" y="215" width="5" height="11" fill="#fff"/>
<rect x="674" y="216" width="3" height="9" fill="#b8170f"/>
<rect x="680" y="201" width="1" height="30" fill="#fff"/>
<rect x="678" y="202" width="5" height="26" fill="#fff"/>
<rect x="679" y="203" width="3" height="24" fill="#0a8a1a"/>
<rect x="684" y="197" width="1" height="37" fill="#fff"/>
<rect x="682" y="201" width="5" height="14" fill="#fff"/>
<rect x="683" y="202" width="3" height="12" fill="#b8170f"/>
<rect x="688" y="208" width="1" height="12" fill="#fff"/>
<rect x="686" y="208" width="5" height="11" fill="#fff"/>
<rect x="687" y="209" width="3" height="9" fill="#0a8a1a"/>
<rect x="692" y="205" width="1" height="10" fill="#fff"/>
<rect x="690" y="205" width="5" height="10" fill="#fff"/>
<rect x="691" y="206" width="3" height="8" fill="#b8170f"/>
<rect x="697" y="211" width="1" height="20" fill="#fff"/>
<rect x="695" y="211" width="5" height="17" fill="#fff"/>
<rect x="696" y="212" width="3" height="15" fill="#b8170f"/>
<rect x="701" y="225" width="1" height="10" fill="#fff"/>
<rect x="699" y="229" width="5" height="4" fill="#fff"/>
<rect x="700" y="230" width="3" height="2" fill="#b8170f"/>
<rect x="705" y="230" width="1" height="21" fill="#fff"/>
<rect x="703" y="231" width="5" height="19" fill="#fff"/>
<rect x="704" y="232" width="3" height="17" fill="#b8170f"/>
<rect x="709" y="231" width="1" height="17" fill="#fff"/>
<rect x="707" y="233" width="5" height="14" fill="#fff"/>
<rect x="708" y="234" width="3" height="12" fill="#0a8a1a"/>
<rect x="714" y="229" width="1" height="23" fill="#fff"/>
<rect x="712" y="237" width="5" height="14" fill="#fff"/>
<rect x="713" y="238" width="3" height="12" fill="#b8170f"/>
<rect x="718" y="249" width="1" height="20" fill="#fff"/>
<rect x="716" y="250" width="5" height="4" fill="#fff"/>
<rect x="717" y="251" width="3" height="2" fill="#b8170f"/>
<rect x="722" y="252" width="1" height="11" fill="#fff"/>
<rect x="720" y="254" width="5" height="7" fill="#fff"/>
<rect x="721" y="255" width="3" height="5" fill="#b8170f"/>
<rect x="726" y="258" width="1" height="13" fill="#fff"/>
<rect x="724" y="259" width="5" height="2" fill="#fff"/>
<rect x="730" y="247" width="1" height="13" fill="#fff"/>
<rect x="728" y="251" width="5" height="8" fill="#fff"/>
<rect x="729" y="252" width="3" height="6" fill="#0a8a1a"/>
<rect x="735" y="246" width="1" height="20" fill="#fff"/>
<rect x="733" y="249" width="5" height="16" fill="#fff"/>
<rect x="734" y="250" width="3" height="14" fill="#b8170f"/>
<rect x="739" y="259" width="1" height="6" fill="#fff"/>
<rect x="737" y="260" width="5" height="3" fill="#fff"/>
<rect x="738" y="261" width="3" height="1" fill="#b8170f"/>
<rect x="743" y="260" width="1" height="6" fill="#fff"/>
<rect x="741" y="263" width="5" height="2" fill="#fff"/>
<rect x="747" y="261" width="1" height="12" fill="#fff"/>
<rect x="745" y="264" width="5" height="8" fill="#fff"/>
<rect x="746" y="265" width="3" height="6" fill="#b8170f"/>
<rect x="752" y="266" width="1" height="10" fill="#fff"/>
<rect x="750" y="268" width="5" height="7" fill="#fff"/>
<rect x="751" y="269" width="3" height="5" fill="#b8170f"/>
<rect x="756" y="267" width="1" height="8" fill="#fff"/>
<rect x="754" y="272" width="5" height="3" fill="#fff"/>
<rect x="755" y="273" width="3" height="1" fill="#0a8a1a"/>
<rect x="760" y="272" width="1" height="4" fill="#fff"/>
<rect x="758" y="273" width="5" height="3" fill="#fff"/>
<rect x="759" y="274" width="3" height="1" fill="#b8170f"/>
<rect x="764" y="253" width="1" height="23" fill="#fff"/>
<rect x="762" y="254" width="5" height="21" fill="#fff"/>
<rect x="763" y="255" width="3" height="19" fill="#0a8a1a"/>
<rect x="769" y="254" width="1" height="10" fill="#fff"/>
<rect x="767" y="254" width="5" height="9" fill="#fff"/>
<rect x="768" y="255" width="3" height="7" fill="#b8170f"/>
<rect x="773" y="254" width="1" height="14" fill="#fff"/>
<rect x="771" y="254" width="5" height="10" fill="#fff"/>
<rect x="772" y="255" width="3" height="8" fill="#0a8a1a"/>
<rect x="777" y="243" width="1" height="16" fill="#fff"/>
<rect x="775" y="246" width="5" height="12" fill="#fff"/>
<rect x="776" y="247" width="3" height="10" fill="#0a8a1a"/>
<rect x="781" y="239" width="1" height="17" fill="#fff"/>
<rect x="779" y="244" width="5" height="7" fill="#fff"/>
<rect x="780" y="245" width="3" height="5" fill="#b8170f"/>
<rect x="785" y="248" width="1" height="14" fill="#fff"/>
<rect x="783" y="248" width="5" height="10" fill="#fff"/>
<rect x="784" y="249" width="3" height="8" fill="#b8170f"/>
<rect x="790" y="252" width="1" height="6" fill="#fff"/>
<rect x="788" y="254" width="5" height="3" fill="#fff"/>
<rect x="789" y="255" width="3" height="1" fill="#b8170f"/>
<rect x="794" y="250" width="1" height="7" fill="#fff"/>
<rect x="792" y="252" width="5" height="3" fill="#fff"/>
<rect x="793" y="253" width="3" height="1" fill="#0a8a1a"/>
<rect x="798" y="251" width="1" height="9" fill="#fff"/>
<rect x="796" y="255" width="5" height="3" fill="#fff"/>
<rect x="797" y="256" width="3" height="1" fill="#b8170f"/>
<rect x="802" y="254" width="1" height="7" fill="#fff"/>
<rect x="800" y="254" width="5" height="7" fill="#fff"/>
<rect x="801" y="255" width="3" height="5" fill="#b8170f"/>
<rect x="807" y="254" width="1" height="7" fill="#fff"/>
<rect x="805" y="254" width="5" height="7" fill="#fff"/>
<rect x="806" y="255" width="3" height="5" fill="#0a8a1a"/>
<rect x="811" y="243" width="1" height="13" fill="#fff"/>
<rect x="809" y="250" width="5" height="3" fill="#fff"/>
<rect x="810" y="251" width="3" height="1" fill="#b8170f"/>
<rect x="815" y="251" width="1" height="6" fill="#fff"/>
<rect x="813" y="254" width="5" height="2" fill="#fff"/>
<rect x="819" y="254" width="1" height="2" fill="#fff"/>
<rect x="817" y="254" width="5" height="3" fill="#fff"/>
<rect x="818" y="255" width="3" height="1" fill="#b8170f"/>
<rect x="823" y="251" width="1" height="7" fill="#fff"/>
<rect x="821" y="251" width="5" height="7" fill="#fff"/>
<rect x="822" y="252" width="3" height="5" fill="#0a8a1a"/>
<rect x="828" y="225" width="1" height="22" fill="#fff"/>
<rect x="826" y="230" width="5" height="17" fill="#fff"/>
<rect x="827" y="231" width="3" height="15" fill="#0a8a1a"/>
<rect x="832" y="228" width="1" height="6" fill="#fff"/>
<rect x="830" y="230" width="5" height="3" fill="#fff"/>
<rect x="831" y="231" width="3" height="1" fill="#0a8a1a"/>
<rect x="836" y="232" width="1" height="11" fill="#fff"/>
<rect x="834" y="232" width="5" height="10" fill="#fff"/>
<rect x="835" y="233" width="3" height="8" fill="#b8170f"/>
<rect x="840" y="241" width="1" height="6" fill="#fff"/>
<rect x="838" y="242" width="5" height="4" fill="#fff"/>
<rect x="839" y="243" width="3" height="2" fill="#b8170f"/>
<rect x="845" y="246" width="1" height="13" fill="#fff"/>
<rect x="843" y="247" width="5" height="11" fill="#fff"/>
<rect x="844" y="248" width="3" height="9" fill="#b8170f"/>
<rect x="849" y="251" width="1" height="7" fill="#fff"/>
<rect x="847" y="254" width="5" height="2" fill="#fff"/>
<rect x="853" y="248" width="1" height="10" fill="#fff"/>
<rect x="851" y="251" width="5" height="4" fill="#fff"/>
<rect x="852" y="252" width="3" height="2" fill="#0a8a1a"/>
<rect x="857" y="246" width="1" height="8" fill="#fff"/>
<rect x="855" y="247" width="5" height="6" fill="#fff"/>
<rect x="856" y="248" width="3" height="4" fill="#b8170f"/>
<rect x="862" y="254" width="1" height="22" fill="#fff"/>
<rect x="860" y="255" width="5" height="17" fill="#fff"/>
<rect x="861" y="256" width="3" height="15" fill="#b8170f"/>
<rect x="866" y="267" width="1" height="8" fill="#fff"/>
<rect x="864" y="271" width="5" height="3" fill="#fff"/>
<rect x="865" y="272" width="3" height="1" fill="#b8170f"/>
<rect x="870" y="269" width="1" height="13" fill="#fff"/>
<rect x="868" y="270" width="5" height="9" fill="#fff"/>
<rect x="869" y="271" width="3" height="7" fill="#b8170f"/>
<rect x="874" y="277" width="1" height="6" fill="#fff"/>
<rect x="872" y="279" width="5" height="3" fill="#fff"/>
<rect x="873" y="280" width="3" height="1" fill="#b8170f"/>
<rect x="878" y="281" width="1" height="8" fill="#fff"/>
<rect x="876" y="282" width="5" height="4" fill="#fff"/>
<rect x="877" y="283" width="3" height="2" fill="#b8170f"/>
<rect x="883" y="285" width="1" height="4" fill="#fff"/>
<rect x="881" y="285" width="5" height="3" fill="#fff"/>
<rect x="882" y="286" width="3" height="1" fill="#b8170f"/>
<rect x="887" y="287" width="1" height="14" fill="#fff"/>
<rect x="885" y="288" width="5" height="5" fill="#fff"/>
<rect x="886" y="289" width="3" height="3" fill="#b8170f"/>
<rect x="891" y="291" width="1" height="6" fill="#fff"/>
<rect x="889" y="293" width="5" height="3" fill="#fff"/>
<rect x="890" y="294" width="3" height="1" fill="#0a8a1a"/>
<rect x="895" y="285" width="1" height="11" fill="#fff"/>
<rect x="893" y="286" width="5" height="8" fill="#fff"/>
<rect x="894" y="287" width="3" height="6" fill="#0a8a1a"/>
<rect x="900" y="284" width="1" height="5" fill="#fff"/>
<rect x="898" y="285" width="5" height="3" fill="#fff"/>
<rect x="899" y="286" width="3" height="1" fill="#b8170f"/>
<rect x="904" y="278" width="1" height="10" fill="#fff"/>
<rect x="902" y="282" width="5" height="4" fill="#fff"/>
<rect x="903" y="283" width="3" height="2" fill="#0a8a1a"/>
<rect x="908" y="276" width="1" height="9" fill="#fff"/>
<rect x="906" y="282" width="5" height="2" fill="#fff"/>
<rect x="912" y="283" width="1" height="6" fill="#fff"/>
<rect x="910" y="285" width="5" height="2" fill="#fff"/>
<rect x="917" y="285" width="1" height="8" fill="#fff"/>
<rect x="915" y="286" width="5" height="3" fill="#fff"/>
<rect x="916" y="287" width="3" height="1" fill="#0a8a1a"/>
<rect x="921" y="287" width="1" height="3" fill="#fff"/>
<rect x="919" y="287" width="5" height="2" fill="#fff"/>
<rect x="925" y="288" width="1" height="15" fill="#fff"/>
<rect x="923" y="289" width="5" height="14" fill="#fff"/>
<rect x="924" y="290" width="3" height="12" fill="#b8170f"/>
<rect x="929" y="299" width="1" height="8" fill="#fff"/>
<rect x="927" y="301" width="5" height="2" fill="#fff"/>
<rect x="933" y="299" width="1" height="8" fill="#fff"/>
<rect x="931" y="303" width="5" height="4" fill="#fff"/>
<rect x="932" y="304" width="3" height="2" fill="#b8170f"/>
<rect x="938" y="305" width="1" height="5" fill="#fff"/>
<rect x="936" y="306" width="5" height="2" fill="#fff"/>
<rect x="942" y="306" width="1" height="5" fill="#fff"/>
<rect x="940" y="309" width="5" height="2" fill="#fff"/>
<rect x="946" y="287" width="1" height="24" fill="#fff"/>
<rect x="944" y="288" width="5" height="22" fill="#fff"/>
<rect x="945" y="289" width="3" height="20" fill="#0a8a1a"/>
<rect x="950" y="259" width="1" height="31" fill="#fff"/>
<rect x="948" y="279" width="5" height="10" fill="#fff"/>
<rect x="949" y="280" width="3" height="8" fill="#0a8a1a"/>
<rect x="955" y="257" width="1" height="26" fill="#fff"/>
<rect x="953" y="257" width="5" height="24" fill="#fff"/>
<rect x="954" y="258" width="3" height="22" fill="#0a8a1a"/>
<rect x="959" y="257" width="1" height="9" fill="#fff"/>
<rect x="957" y="261" width="5" height="4" fill="#fff"/>
<rect x="958" y="262" width="3" height="2" fill="#b8170f"/>
<rect x="963" y="264" width="1" height="5" fill="#fff"/>
<rect x="961" y="267" width="5" height="2" fill="#fff"/>
<rect x="967" y="265" width="1" height="6" fill="#fff"/>
<rect x="965" y="268" width="5" height="3" fill="#fff"/>
<rect x="966" y="269" width="3" height="1" fill="#b8170f"/>
<rect x="972" y="268" width="1" height="5" fill="#fff"/>
<rect x="970" y="269" width="5" height="3" fill="#fff"/>
<rect x="971" y="270" width="3" height="1" fill="#0a8a1a"/>
<rect x="976" y="258" width="1" height="14" fill="#fff"/>
<rect x="974" y="267" width="5" height="2" fill="#fff"/>
<rect x="980" y="262" width="1" height="5" fill="#fff"/>
<rect x="978" y="264" width="5" height="2" fill="#fff"/>
<rect x="984" y="257" width="1" height="17" fill="#fff"/>
<rect x="982" y="261" width="5" height="11" fill="#fff"/>
<rect x="983" y="262" width="3" height="9" fill="#b8170f"/>
<rect x="988" y="261" width="1" height="10" fill="#fff"/>
<rect x="986" y="263" width="5" height="5" fill="#fff"/>
<rect x="987" y="264" width="3" height="3" fill="#0a8a1a"/>
<rect x="993" y="261" width="1" height="14" fill="#fff"/>
<rect x="991" y="261" width="5" height="13" fill="#fff"/>
<rect x="992" y="262" width="3" height="11" fill="#b8170f"/>
<rect x="997" y="272" width="1" height="8" fill="#fff"/>
<rect x="995" y="274" width="5" height="3" fill="#fff"/>
<rect x="996" y="275" width="3" height="1" fill="#b8170f"/>
<rect x="1001" y="272" width="1" height="8" fill="#fff"/>
<rect x="999" y="274" width="5" height="2" fill="#fff"/>
<rect x="1005" y="274" width="1" height="2" fill="#fff"/>
<rect x="1003" y="274" width="5" height="2" fill="#fff"/>
<rect x="1010" y="264" width="1" height="16" fill="#fff"/>
<rect x="1008" y="265" width="5" height="14" fill="#fff"/>
<rect x="1009" y="266" width="3" height="12" fill="#0a8a1a"/>
<rect x="1014" y="265" width="1" height="3" fill="#fff"/>
<rect x="1012" y="265" width="5" height="3" fill="#fff"/>
<rect x="1013" y="266" width="3" height="1" fill="#b8170f"/>
<rect x="1018" y="244" width="1" height="22" fill="#fff"/>
<rect x="1016" y="244" width="5" height="22" fill="#fff"/>
<rect x="1017" y="245" width="3" height="20" fill="#0a8a1a"/>
<rect x="1022" y="244" width="1" height="10" fill="#fff"/>
<rect x="1020" y="244" width="5" height="10" fill="#fff"/>
<rect x="1021" y="245" width="3" height="8" fill="#b8170f"/>
<rect x="1026" y="256" width="1" height="6" fill="#fff"/>
<rect x="1024" y="258" width="5" height="2" fill="#fff"/>
<rect x="1031" y="248" width="1" height="11" fill="#fff"/>
<rect x="1029" y="251" width="5" height="7" fill="#fff"/>
<rect x="1030" y="252" width="3" height="5" fill="#0a8a1a"/>
<rect x="1035" y="245" width="1" height="7" fill="#fff"/>
<rect x="1033" y="247" width="5" height="4" fill="#fff"/>
<rect x="1034" y="248" width="3" height="2" fill="#b8170f"/>
<rect x="1039" y="250" width="1" height="5" fill="#fff"/>
<rect x="1037" y="251" width="5" height="3" fill="#fff"/>
<rect x="1038" y="252" width="3" height="1" fill="#b8170f"/>
<rect x="1043" y="253" width="1" height="9" fill="#fff"/>
<rect x="1041" y="254" width="5" height="4" fill="#fff"/>
<rect x="1042" y="255" width="3" height="2" fill="#b8170f"/>
<rect x="1048" y="258" width="1" height="2" fill="#fff"/>
<rect x="1046" y="258" width="5" height="3" fill="#fff"/>
<rect x="1047" y="259" width="3" height="1" fill="#b8170f"/>
<rect x="1052" y="257" width="1" height="4" fill="#fff"/>
<rect x="1050" y="258" width="5" height="2" fill="#fff"/>
<rect x="1056" y="258" width="1" height="3" fill="#fff"/>
<rect x="1054" y="259" width="5" height="2" fill="#fff"/>
<rect x="1060" y="259" width="1" height="2" fill="#fff"/>
<rect x="1058" y="259" width="5" height="2" fill="#fff"/>
<rect x="1065" y="258" width="1" height="7" fill="#fff"/>
<rect x="1063" y="260" width="5" height="3" fill="#fff"/>
<rect x="1064" y="261" width="3" height="1" fill="#b8170f"/>
<rect x="1069" y="261" width="1" height="15" fill="#fff"/>
<rect x="1067" y="264" width="5" height="11" fill="#fff"/>
<rect x="1068" y="265" width="3" height="9" fill="#b8170f"/>
<rect x="1073" y="271" width="1" height="9" fill="#fff"/>
<rect x="1071" y="272" width="5" height="7" fill="#fff"/>
<rect x="1072" y="273" width="3" height="5" fill="#b8170f"/>
<rect x="1077" y="273" width="1" height="6" fill="#fff"/>
<rect x="1075" y="275" width="5" height="3" fill="#fff"/>
<rect x="1076" y="276" width="3" height="1" fill="#b8170f"/>
<rect x="1081" y="274" width="1" height="9" fill="#fff"/>
<rect x="1079" y="277" width="5" height="2" fill="#fff"/>
<rect x="1086" y="278" width="1" height="2" fill="#fff"/>
<rect x="1084" y="278" width="5" height="2" fill="#fff"/>
<rect x="1090" y="275" width="1" height="5" fill="#fff"/>
<rect x="1088" y="278" width="5" height="2" fill="#fff"/>
<rect x="1094" y="277" width="1" height="2" fill="#fff"/>
<rect x="1092" y="277" width="5" height="3" fill="#fff"/>
<rect x="1093" y="278" width="3" height="1" fill="#0a8a1a"/>
<rect x="1098" y="277" width="1" height="2" fill="#fff"/>
<rect x="1096" y="277" width="5" height="2" fill="#fff"/>
<rect x="1103" y="277" width="1" height="2" fill="#fff"/>
<rect x="1101" y="277" width="5" height="3" fill="#fff"/>
<rect x="1102" y="278" width="3" height="1" fill="#b8170f"/>
<rect x="1107" y="275" width="1" height="8" fill="#fff"/>
<rect x="1105" y="277" width="5" height="6" fill="#fff"/>
<rect x="1106" y="278" width="3" height="4" fill="#b8170f"/>
<rect x="1111" y="281" width="1" height="12" fill="#fff"/>
<rect x="1109" y="282" width="5" height="9" fill="#fff"/>
<rect x="1110" y="283" width="3" height="7" fill="#b8170f"/>
<rect x="1115" y="291" width="1" height="5" fill="#fff"/>
<rect x="1113" y="291" width="5" height="5" fill="#fff"/>
<rect x="1114" y="292" width="3" height="3" fill="#b8170f"/>
<rect x="1120" y="296" width="1" height="19" fill="#fff"/>
<rect x="1118" y="296" width="5" height="17" fill="#fff"/>
<rect x="1119" y="297" width="3" height="15" fill="#b8170f"/>
<rect x="1124" y="292" width="1" height="20" fill="#fff"/>
<rect x="1122" y="293" width="5" height="17" fill="#fff"/>
<rect x="1123" y="294" width="3" height="15" fill="#0a8a1a"/>
<rect x="1128" y="285" width="1" height="8" fill="#fff"/>
<rect x="1126" y="289" width="5" height="4" fill="#fff"/>
<rect x="1127" y="290" width="3" height="2" fill="#0a8a1a"/>
<rect x="1132" y="287" width="1" height="10" fill="#fff"/>
<rect x="1130" y="288" width="5" height="5" fill="#fff"/>
<rect x="1131" y="289" width="3" height="3" fill="#b8170f"/>
<rect x="1136" y="290" width="1" height="7" fill="#fff"/>
<rect x="1134" y="293" width="5" height="3" fill="#fff"/>
<rect x="1135" y="294" width="3" height="1" fill="#0a8a1a"/>
<rect x="1141" y="278" width="1" height="14" fill="#fff"/>
<rect x="1139" y="288" width="5" height="3" fill="#fff"/>
<rect x="1140" y="289" width="3" height="1" fill="#b8170f"/>
<rect x="1145" y="280" width="1" height="7" fill="#fff"/>
<rect x="1143" y="282" width="5" height="4" fill="#fff"/>
<rect x="1144" y="283" width="3" height="2" fill="#0a8a1a"/>
<rect x="1149" y="282" width="1" height="3" fill="#fff"/>
<rect x="1147" y="282" width="5" height="3" fill="#fff"/>
<rect x="1148" y="283" width="3" height="1" fill="#0a8a1a"/>
<rect x="1153" y="282" width="1" height="3" fill="#fff"/>
<rect x="1151" y="282" width="5" height="3" fill="#fff"/>
<rect x="1152" y="283" width="3" height="1" fill="#0a8a1a"/>
<rect x="1158" y="281" width="1" height="9" fill="#fff"/>
<rect x="1156" y="287" width="5" height="3" fill="#fff"/>
<rect x="1157" y="288" width="3" height="1" fill="#b8170f"/>
<rect x="1162" y="283" width="1" height="4" fill="#fff"/>
<rect x="1160" y="284" width="5" height="2" fill="#fff"/>
<rect x="1166" y="284" width="1" height="2" fill="#fff"/>
<rect x="1164" y="284" width="5" height="2" fill="#fff"/>
<rect x="1170" y="283" width="1" height="5" fill="#fff"/>
<rect x="1168" y="284" width="5" height="2" fill="#fff"/>
<rect x="1174" y="287" width="1" height="6" fill="#fff"/>
<rect x="1172" y="287" width="5" height="6" fill="#fff"/>
<rect x="1173" y="288" width="3" height="4" fill="#b8170f"/>
<rect x="1179" y="287" width="1" height="21" fill="#fff"/>
<rect x="1177" y="293" width="5" height="5" fill="#fff"/>
<rect x="1178" y="294" width="3" height="3" fill="#b8170f"/>
<rect x="1183" y="298" width="1" height="10" fill="#fff"/>
<rect x="1181" y="300" width="5" height="5" fill="#fff"/>
<rect x="1182" y="301" width="3" height="3" fill="#b8170f"/>
<rect x="1187" y="303" width="1" height="4" fill="#fff"/>
<rect x="1185" y="303" width="5" height="4" fill="#fff"/>
<rect x="1186" y="304" width="3" height="2" fill="#0a8a1a"/>
<rect x="1191" y="288" width="1" height="16" fill="#fff"/>
<rect x="1189" y="290" width="5" height="13" fill="#fff"/>
<rect x="1190" y="291" width="3" height="11" fill="#0a8a1a"/>
<rect x="1196" y="288" width="1" height="8" fill="#fff"/>
<rect x="1194" y="289" width="5" height="6" fill="#fff"/>
<rect x="1195" y="290" width="3" height="4" fill="#b8170f"/>
<rect x="1198" y="294" width="5" height="2" fill="#fff"/>
<rect x="1204" y="292" width="1" height="3" fill="#fff"/>
<rect x="1202" y="293" width="5" height="2" fill="#fff"/>
<rect x="1208" y="294" width="1" height="7" fill="#fff"/>
<rect x="1206" y="295" width="5" height="5" fill="#fff"/>
<rect x="1207" y="296" width="3" height="3" fill="#b8170f"/>
<rect x="1213" y="296" width="1" height="4" fill="#fff"/>
<rect x="1211" y="296" width="5" height="4" fill="#fff"/>
<rect x="1212" y="297" width="3" height="2" fill="#b8170f"/>
<rect x="1215" y="294" width="5" height="2" fill="#fff"/>
<rect x="1221" y="293" width="1" height="2" fill="#fff"/>
<rect x="1219" y="293" width="5" height="2" fill="#fff"/>
<rect x="1225" y="293" width="1" height="11" fill="#fff"/>
<rect x="1223" y="294" width="5" height="9" fill="#fff"/>
<rect x="1224" y="295" width="3" height="7" fill="#b8170f"/>
<rect x="1229" y="285" width="1" height="21" fill="#fff"/>
<rect x="1227" y="293" width="5" height="12" fill="#fff"/>
<rect x="1228" y="294" width="3" height="10" fill="#0a8a1a"/>
<rect x="1234" y="293" width="1" height="2" fill="#fff"/>
<rect x="1232" y="293" width="5" height="2" fill="#fff"/>
<rect x="1238" y="290" width="1" height="6" fill="#fff"/>
<rect x="1236" y="293" width="5" height="3" fill="#fff"/>
<rect x="1237" y="294" width="3" height="1" fill="#b8170f"/>
<rect x="1242" y="294" width="1" height="6" fill="#fff"/>
<rect x="1240" y="294" width="5" height="4" fill="#fff"/>
<rect x="1241" y="295" width="3" height="2" fill="#b8170f"/>
<rect x="1246" y="296" width="1" height="18" fill="#fff"/>
<rect x="1244" y="297" width="5" height="15" fill="#fff"/>
<rect x="1245" y="298" width="3" height="13" fill="#b8170f"/>
<rect x="1251" y="308" width="1" height="7" fill="#fff"/>
<rect x="1249" y="309" width="5" height="5" fill="#fff"/>
<rect x="1250" y="310" width="3" height="3" fill="#b8170f"/>
<rect x="1255" y="309" width="1" height="6" fill="#fff"/>
<rect x="1253" y="312" width="5" height="2" fill="#fff"/>
<rect x="1259" y="293" width="1" height="22" fill="#fff"/>
<rect x="1257" y="295" width="5" height="18" fill="#fff"/>
<rect x="1258" y="296" width="3" height="16" fill="#0a8a1a"/>
<rect x="1263" y="292" width="1" height="5" fill="#fff"/>
<rect x="1261" y="293" width="5" height="3" fill="#fff"/>
<rect x="1262" y="294" width="3" height="1" fill="#b8170f"/>
<rect x="1268" y="294" width="1" height="13" fill="#fff"/>
<rect x="1266" y="295" width="5" height="12" fill="#fff"/>
<rect x="1267" y="296" width="3" height="10" fill="#b8170f"/>
<rect x="1272" y="303" width="1" height="11" fill="#fff"/>
<rect x="1270" y="304" width="5" height="9" fill="#fff"/>
<rect x="1271" y="305" width="3" height="7" fill="#b8170f"/>
<rect x="1276" y="310" width="1" height="4" fill="#fff"/>
<rect x="1274" y="310" width="5" height="4" fill="#fff"/>
<rect x="1275" y="311" width="3" height="2" fill="#0a8a1a"/>
<rect x="1280" y="309" width="1" height="6" fill="#fff"/>
<rect x="1278" y="311" width="5" height="3" fill="#fff"/>
<rect x="1279" y="312" width="3" height="1" fill="#b8170f"/>
<rect x="1284" y="309" width="1" height="5" fill="#fff"/>
<rect x="1282" y="310" width="5" height="3" fill="#fff"/>
<rect x="1283" y="311" width="3" height="1" fill="#b8170f"/>
<rect x="1289" y="311" width="1" height="3" fill="#fff"/>
<rect x="1287" y="311" width="5" height="3" fill="#fff"/>
<rect x="1288" y="312" width="3" height="1" fill="#b8170f"/>
<rect x="1293" y="312" width="1" height="2" fill="#fff"/>
<rect x="1291" y="312" width="5" height="2" fill="#fff"/>
<rect x="1297" y="312" width="1" height="2" fill="#fff"/>
<rect x="1295" y="312" width="5" height="2" fill="#fff"/>
<rect x="1301" y="288" width="1" height="26" fill="#fff"/>
<rect x="1299" y="293" width="5" height="21" fill="#fff"/>
<rect x="1300" y="294" width="3" height="19" fill="#0a8a1a"/>
<rect x="1306" y="293" width="1" height="4" fill="#fff"/>
<rect x="1304" y="294" width="5" height="2" fill="#fff"/>
<rect x="1310" y="294" width="1" height="2" fill="#fff"/>
<rect x="1308" y="294" width="5" height="2" fill="#fff"/>
<rect x="1314" y="293" width="1" height="3" fill="#fff"/>
<rect x="1312" y="293" width="5" height="3" fill="#fff"/>
<rect x="1313" y="294" width="3" height="1" fill="#0a8a1a"/>
<rect x="1318" y="272" width="1" height="23" fill="#fff"/>
<rect x="1316" y="272" width="5" height="23" fill="#fff"/>
<rect x="1317" y="273" width="3" height="21" fill="#0a8a1a"/>
<rect x="1323" y="272" width="1" height="3" fill="#fff"/>
<rect x="1321" y="272" width="5" height="3" fill="#fff"/>
<rect x="1322" y="273" width="3" height="1" fill="#0a8a1a"/>
<rect x="1327" y="272" width="1" height="14" fill="#fff"/>
<rect x="1325" y="273" width="5" height="12" fill="#fff"/>
<rect x="1326" y="274" width="3" height="10" fill="#b8170f"/>
<rect x="1331" y="282" width="1" height="8" fill="#fff"/>
<rect x="1329" y="282" width="5" height="8" fill="#fff"/>
<rect x="1330" y="283" width="3" height="6" fill="#b8170f"/>
<rect x="1335" y="282" width="1" height="9" fill="#fff"/>
<rect x="1333" y="282" width="5" height="9" fill="#fff"/>
<rect x="1334" y="283" width="3" height="7" fill="#0a8a1a"/>
<rect x="1339" y="281" width="1" height="6" fill="#fff"/>
<rect x="1337" y="283" width="5" height="2" fill="#fff"/>
<rect x="1344" y="284" width="1" height="7" fill="#fff"/>
<rect x="1342" y="284" width="5" height="7" fill="#fff"/>
<rect x="1343" y="285" width="3" height="5" fill="#b8170f"/>
<rect x="1348" y="288" width="1" height="3" fill="#fff"/>
<rect x="1346" y="288" width="5" height="3" fill="#fff"/>
<rect x="1347" y="289" width="3" height="1" fill="#b8170f"/>
<rect x="1352" y="289" width="1" height="2" fill="#fff"/>
<rect x="1350" y="289" width="5" height="2" fill="#fff"/>
<rect x="1356" y="290" width="1" height="2" fill="#fff"/>
<rect x="1354" y="290" width="5" height="2" fill="#fff"/>
<rect x="1361" y="293" width="1" height="2" fill="#fff"/>
<rect x="1359" y="293" width="5" height="3" fill="#fff"/>
<rect x="1360" y="294" width="3" height="1" fill="#b8170f"/>
<rect x="1365" y="293" width="1" height="2" fill="#fff"/>
<rect x="1363" y="293" width="5" height="2" fill="#fff"/>
<rect x="1369" y="289" width="1" height="6" fill="#fff"/>
<rect x="1367" y="289" width="5" height="6" fill="#fff"/>
<rect x="1368" y="290" width="3" height="4" fill="#0a8a1a"/>
<rect x="1373" y="283" width="1" height="4" fill="#fff"/>
<rect x="1371" y="284" width="5" height="3" fill="#fff"/>
<rect x="1372" y="285" width="3" height="1" fill="#0a8a1a"/>
<rect x="1377" y="283" width="1" height="2" fill="#fff"/>
<rect x="1375" y="283" width="5" height="2" fill="#fff"/>
<rect x="1382" y="251" width="1" height="32" fill="#fff"/>
<rect x="1380" y="257" width="5" height="26" fill="#fff"/>
<rect x="1381" y="258" width="3" height="24" fill="#0a8a1a"/>
<rect x="1386" y="244" width="1" height="15" fill="#fff"/>
<rect x="1384" y="246" width="5" height="12" fill="#fff"/>
<rect x="1385" y="247" width="3" height="10" fill="#0a8a1a"/>
<rect x="1390" y="246" width="1" height="2" fill="#fff"/>
<rect x="1388" y="246" width="5" height="2" fill="#fff"/>
<rect x="1394" y="246" width="1" height="6" fill="#fff"/>
<rect x="1392" y="248" width="5" height="3" fill="#fff"/>
<rect x="1393" y="249" width="3" height="1" fill="#0a8a1a"/>
<rect x="1399" y="249" width="1" height="2" fill="#fff"/>
<rect x="1397" y="249" width="5" height="2" fill="#fff"/>
<rect x="1403" y="246" width="1" height="6" fill="#fff"/>
<rect x="1401" y="248" width="5" height="3" fill="#fff"/>
<rect x="1402" y="249" width="3" height="1" fill="#b8170f"/>
<rect x="1407" y="229" width="1" height="22" fill="#fff"/>
<rect x="1405" y="229" width="5" height="22" fill="#fff"/>
<rect x="1406" y="230" width="3" height="20" fill="#0a8a1a"/>
<rect x="1411" y="218" width="1" height="13" fill="#fff"/>
<rect x="1409" y="218" width="5" height="12" fill="#fff"/>
<rect x="1410" y="219" width="3" height="10" fill="#0a8a1a"/>
<rect x="1416" y="218" width="1" height="4" fill="#fff"/>
<rect x="1414" y="218" width="5" height="4" fill="#fff"/>
<rect x="1415" y="219" width="3" height="2" fill="#0a8a1a"/>
<rect x="1420" y="214" width="1" height="13" fill="#fff"/>
<rect x="1418" y="218" width="5" height="8" fill="#fff"/>
<rect x="1419" y="219" width="3" height="6" fill="#b8170f"/>
<rect x="1424" y="221" width="1" height="6" fill="#fff"/>
<rect x="1422" y="224" width="5" height="2" fill="#fff"/>
<rect x="1428" y="223" width="1" height="10" fill="#fff"/>
<rect x="1426" y="224" width="5" height="7" fill="#fff"/>
<rect x="1427" y="225" width="3" height="5" fill="#b8170f"/>
<rect x="1432" y="230" width="1" height="15" fill="#fff"/>
<rect x="1430" y="230" width="5" height="7" fill="#fff"/>
<rect x="1431" y="231" width="3" height="5" fill="#b8170f"/>
<rect x="1437" y="229" width="1" height="10" fill="#fff"/>
<rect x="1435" y="236" width="5" height="3" fill="#fff"/>
<rect x="1436" y="237" width="3" height="1" fill="#0a8a1a"/>
<rect x="1441" y="234" width="1" height="2" fill="#fff"/>
<rect x="1439" y="234" width="5" height="2" fill="#fff"/>
<rect x="1445" y="234" width="1" height="7" fill="#fff"/>
<rect x="1443" y="237" width="5" height="3" fill="#fff"/>
<rect x="1444" y="238" width="3" height="1" fill="#b8170f"/>
<rect x="1449" y="238" width="1" height="2" fill="#fff"/>
<rect x="1447" y="238" width="5" height="2" fill="#fff"/>
<rect x="1454" y="236" width="1" height="10" fill="#fff"/>
<rect x="1452" y="239" width="5" height="6" fill="#fff"/>
<rect x="1453" y="240" width="3" height="4" fill="#b8170f"/>
<rect x="1458" y="244" width="1" height="2" fill="#fff"/>
<rect x="1456" y="244" width="5" height="2" fill="#fff"/>
<rect x="1462" y="243" width="1" height="26" fill="#fff"/>
<rect x="1460" y="244" width="5" height="18" fill="#fff"/>
<rect x="1461" y="245" width="3" height="16" fill="#b8170f"/>
<rect x="1466" y="261" width="1" height="11" fill="#fff"/>
<rect x="1464" y="264" width="5" height="4" fill="#fff"/>
<rect x="1465" y="265" width="3" height="2" fill="#b8170f"/>
<rect x="1471" y="256" width="1" height="13" fill="#fff"/>
<rect x="1469" y="258" width="5" height="10" fill="#fff"/>
<rect x="1470" y="259" width="3" height="8" fill="#0a8a1a"/>
<rect x="1475" y="256" width="1" height="5" fill="#fff"/>
<rect x="1473" y="258" width="5" height="2" fill="#fff"/>
<rect x="1479" y="257" width="1" height="14" fill="#fff"/>
<rect x="1477" y="258" width="5" height="12" fill="#fff"/>
<rect x="1478" y="259" width="3" height="10" fill="#b8170f"/>
<rect x="1483" y="267" width="1" height="9" fill="#fff"/>
<rect x="1481" y="272" width="5" height="4" fill="#fff"/>
<rect x="1482" y="273" width="3" height="2" fill="#b8170f"/>
<rect x="1487" y="266" width="1" height="10" fill="#fff"/>
<rect x="1485" y="268" width="5" height="4" fill="#fff"/>
<rect x="1486" y="269" width="3" height="2" fill="#0a8a1a"/>
<rect x="1492" y="257" width="1" height="12" fill="#fff"/>
<rect x="1490" y="261" width="5" height="7" fill="#fff"/>
<rect x="1491" y="262" width="3" height="5" fill="#0a8a1a"/>
<rect x="1496" y="256" width="1" height="5" fill="#fff"/>
<rect x="1494" y="257" width="5" height="3" fill="#fff"/>
<rect x="1495" y="258" width="3" height="1" fill="#b8170f"/>
<rect x="1500" y="257" width="1" height="16" fill="#fff"/>
<rect x="1498" y="258" width="5" height="14" fill="#fff"/>
<rect x="1499" y="259" width="3" height="12" fill="#b8170f"/>
<rect x="1504" y="263" width="1" height="20" fill="#fff"/>
<rect x="1502" y="264" width="5" height="18" fill="#fff"/>
<rect x="1503" y="265" width="3" height="16" fill="#b8170f"/>
<rect x="1509" y="279" width="1" height="8" fill="#fff"/>
<rect x="1507" y="284" width="5" height="3" fill="#fff"/>
<rect x="1508" y="285" width="3" height="1" fill="#b8170f"/>
<rect x="1513" y="273" width="1" height="21" fill="#fff"/>
<rect x="1511" y="275" width="5" height="11" fill="#fff"/>
<rect x="1512" y="276" width="3" height="9" fill="#0a8a1a"/>
<rect x="1517" y="274" width="1" height="29" fill="#fff"/>
<rect x="1515" y="275" width="5" height="27" fill="#fff"/>
<rect x="1516" y="276" width="3" height="25" fill="#b8170f"/>
<rect x="1521" y="292" width="1" height="19" fill="#fff"/>
<rect x="1519" y="292" width="5" height="9" fill="#fff"/>
<rect x="1520" y="293" width="3" height="7" fill="#0a8a1a"/>
<rect x="1526" y="287" width="1" height="4" fill="#fff"/>
<rect x="1524" y="288" width="5" height="2" fill="#fff"/>
<rect x="1530" y="286" width="1" height="3" fill="#fff"/>
<rect x="1528" y="286" width="5" height="3" fill="#fff"/>
<rect x="1529" y="287" width="3" height="1" fill="#b8170f"/>
<rect x="1534" y="284" width="1" height="6" fill="#fff"/>
<rect x="1532" y="285" width="5" height="4" fill="#fff"/>
<rect x="1533" y="286" width="3" height="2" fill="#b8170f"/>
<rect x="1538" y="286" width="1" height="4" fill="#fff"/>
<rect x="1536" y="286" width="5" height="4" fill="#fff"/>
<rect x="1537" y="287" width="3" height="2" fill="#b8170f"/>
<rect x="1542" y="288" width="1" height="6" fill="#fff"/>
<rect x="1540" y="289" width="5" height="4" fill="#fff"/>
<rect x="1541" y="290" width="3" height="2" fill="#b8170f"/>
<rect x="1547" y="288" width="1" height="8" fill="#fff"/>
<rect x="1545" y="289" width="5" height="4" fill="#fff"/>
<rect x="1546" y="290" width="3" height="2" fill="#0a8a1a"/>
<rect x="1551" y="289" width="1" height="2" fill="#fff"/>
<rect x="1549" y="289" width="5" height="2" fill="#fff"/>
<rect x="1555" y="286" width="1" height="3" fill="#fff"/>
<rect x="1553" y="286" width="5" height="3" fill="#fff"/>
<rect x="1554" y="287" width="3" height="1" fill="#b8170f"/>
<rect x="1559" y="278" width="1" height="51" fill="#fff"/>
<rect x="1557" y="286" width="5" height="26" fill="#fff"/>
<rect x="1558" y="287" width="3" height="24" fill="#b8170f"/>
<rect x="1564" y="300" width="1" height="12" fill="#fff"/>
<rect x="1562" y="300" width="5" height="12" fill="#fff"/>
<rect x="1563" y="301" width="3" height="10" fill="#0a8a1a"/>
<rect x="1568" y="300" width="1" height="2" fill="#fff"/>
<rect x="1566" y="300" width="5" height="3" fill="#fff"/>
<rect x="1567" y="301" width="3" height="1" fill="#b8170f"/>
<rect x="1572" y="287" width="1" height="16" fill="#fff"/>
<rect x="1570" y="296" width="5" height="4" fill="#fff"/>
<rect x="1571" y="297" width="3" height="2" fill="#0a8a1a"/>
<rect x="1576" y="292" width="1" height="8" fill="#fff"/>
<rect x="1574" y="294" width="5" height="2" fill="#fff"/>
<rect x="1580" y="293" width="1" height="7" fill="#fff"/>
<rect x="1578" y="294" width="5" height="2" fill="#fff"/>
<rect x="1585" y="294" width="1" height="6" fill="#fff"/>
<rect x="1583" y="296" width="5" height="4" fill="#fff"/>
<rect x="1584" y="297" width="3" height="2" fill="#b8170f"/>
<rect x="1589" y="296" width="1" height="7" fill="#fff"/>
<rect x="1587" y="298" width="5" height="3" fill="#fff"/>
<rect x="1588" y="299" width="3" height="1" fill="#b8170f"/>
<rect x="1593" y="300" width="1" height="2" fill="#fff"/>
<rect x="1591" y="300" width="5" height="3" fill="#fff"/>
<rect x="1592" y="301" width="3" height="1" fill="#0a8a1a"/>
<rect x="1597" y="295" width="1" height="2" fill="#fff"/>
<rect x="1595" y="295" width="5" height="2" fill="#fff"/>
<rect x="1602" y="290" width="1" height="9" fill="#fff"/>
<rect x="1600" y="292" width="5" height="4" fill="#fff"/>
<rect x="1601" y="293" width="3" height="2" fill="#0a8a1a"/>
<rect x="1606" y="288" width="1" height="5" fill="#fff"/>
<rect x="1604" y="290" width="5" height="3" fill="#fff"/>
<rect x="1605" y="291" width="3" height="1" fill="#b8170f"/>
<rect x="1610" y="274" width="1" height="18" fill="#fff"/>
<rect x="1608" y="277" width="5" height="14" fill="#fff"/>
<rect x="1609" y="278" width="3" height="12" fill="#0a8a1a"/>
<rect x="1614" y="272" width="1" height="8" fill="#fff"/>
<rect x="1612" y="274" width="5" height="3" fill="#fff"/>
<rect x="1613" y="275" width="3" height="1" fill="#0a8a1a"/>
<rect x="1619" y="271" width="1" height="6" fill="#fff"/>
<rect x="1617" y="274" width="5" height="2" fill="#fff"/>
<rect x="1623" y="271" width="1" height="16" fill="#fff"/>
<rect x="1621" y="272" width="5" height="14" fill="#fff"/>
<rect x="1622" y="273" width="3" height="12" fill="#b8170f"/>
<rect x="1627" y="283" width="1" height="14" fill="#fff"/>
<rect x="1625" y="284" width="5" height="12" fill="#fff"/>
<rect x="1626" y="285" width="3" height="10" fill="#b8170f"/>
<rect x="1631" y="294" width="1" height="13" fill="#fff"/>
<rect x="1629" y="295" width="5" height="8" fill="#fff"/>
<rect x="1630" y="296" width="3" height="6" fill="#b8170f"/>
<rect x="1635" y="281" width="1" height="23" fill="#fff"/>
<rect x="1633" y="282" width="5" height="20" fill="#fff"/>
<rect x="1634" y="283" width="3" height="18" fill="#0a8a1a"/>
<rect x="1640" y="281" width="1" height="7" fill="#fff"/>
<rect x="1638" y="281" width="5" height="7" fill="#fff"/>
<rect x="1639" y="282" width="3" height="5" fill="#b8170f"/>
<rect x="1644" y="284" width="1" height="3" fill="#fff"/>
<rect x="1642" y="284" width="5" height="3" fill="#fff"/>
<rect x="1643" y="285" width="3" height="1" fill="#b8170f"/>
<rect x="1648" y="282" width="1" height="4" fill="#fff"/>
<rect x="1646" y="282" width="5" height="4" fill="#fff"/>
<rect x="1647" y="283" width="3" height="2" fill="#0a8a1a"/>
<rect x="1652" y="271" width="1" height="16" fill="#fff"/>
<rect x="1650" y="279" width="5" height="3" fill="#fff"/>
<rect x="1651" y="280" width="3" height="1" fill="#b8170f"/>
<rect x="1657" y="279" width="1" height="7" fill="#fff"/>
<rect x="1655" y="279" width="5" height="7" fill="#fff"/>
<rect x="1656" y="280" width="3" height="5" fill="#b8170f"/>
<rect x="1661" y="282" width="1" height="4" fill="#fff"/>
<rect x="1659" y="284" width="5" height="2" fill="#fff"/>
<rect x="1665" y="284" width="1" height="2" fill="#fff"/>
<rect x="1663" y="284" width="5" height="2" fill="#fff"/>
<rect x="1669" y="282" width="1" height="5" fill="#fff"/>
<rect x="1667" y="284" width="5" height="2" fill="#fff"/>
<rect x="1674" y="274" width="1" height="12" fill="#fff"/>
<rect x="1672" y="277" width="5" height="9" fill="#fff"/>
<rect x="1673" y="278" width="3" height="7" fill="#0a8a1a"/>
<rect x="1678" y="259" width="1" height="17" fill="#fff"/>
<rect x="1676" y="261" width="5" height="14" fill="#fff"/>
<rect x="1677" y="262" width="3" height="12" fill="#0a8a1a"/>
<rect x="1682" y="257" width="1" height="23" fill="#fff"/>
<rect x="1680" y="263" width="5" height="9" fill="#fff"/>
<rect x="1681" y="264" width="3" height="7" fill="#b8170f"/>
<rect x="1686" y="272" width="1" height="3" fill="#fff"/>
<rect x="1684" y="272" width="5" height="3" fill="#fff"/>
<rect x="1685" y="273" width="3" height="1" fill="#b8170f"/>
<rect x="1690" y="272" width="1" height="3" fill="#fff"/>
<rect x="1688" y="272" width="5" height="3" fill="#fff"/>
<rect x="1689" y="273" width="3" height="1" fill="#b8170f"/>
<rect x="1695" y="273" width="1" height="2" fill="#fff"/>
<rect x="1693" y="273" width="5" height="2" fill="#fff"/>
<rect x="1699" y="269" width="1" height="14" fill="#fff"/>
<rect x="1697" y="275" width="5" height="6" fill="#fff"/>
<rect x="1698" y="276" width="3" height="4" fill="#b8170f"/>
<rect x="1703" y="268" width="1" height="14" fill="#fff"/>
<rect x="1701" y="271" width="5" height="9" fill="#fff"/>
<rect x="1702" y="272" width="3" height="7" fill="#0a8a1a"/>
<rect x="1707" y="267" width="1" height="13" fill="#fff"/>
<rect x="1705" y="268" width="5" height="6" fill="#fff"/>
<rect x="1706" y="269" width="3" height="4" fill="#b8170f"/>
<rect x="1712" y="256" width="1" height="20" fill="#fff"/>
<rect x="1710" y="257" width="5" height="18" fill="#fff"/>
<rect x="1711" y="258" width="3" height="16" fill="#0a8a1a"/>
<polyline points="67.0,101.0 71.2,107.6 75.5,113.1 79.7,118.8 83.9,120.1 88.1,122.1 92.4,124.2 96.6,127.4 100.8,130.8 105.1,133.9 109.3,136.8 113.5,138.3 117.7,139.5 122.0,140.8 126.2,144.4 130.4,151.0 134.7,154.4 138.9,160.0 143.1,164.3 147.4,167.3 151.6,169.8 155.8,170.0 160.0,170.8 164.3,171.7 168.5,171.4 172.7,170.6 177.0,170.7 181.2,170.7 185.4,170.7 189.6,169.9 193.9,170.0 198.1,170.1 202.3,171.4 206.6,172.5 210.8,175.5 215.0,177.8 219.2,182.1 223.5,186.0 227.7,189.1 231.9,191.7 236.2,194.0 240.4,196.9 244.6,198.0 248.8,198.8 253.1,199.1 257.3,199.9 261.5,201.0 265.8,202.6 270.0,203.8 274.2,206.0 278.5,208.1 282.7,210.0 286.9,210.4 291.1,211.5 295.4,212.6 299.6,213.9 303.8,218.7 308.1,223.9 312.3,227.1 316.5,237.0 320.7,246.6 325.0,257.2 329.2,264.1 333.4,271.0 337.7,276.0 341.9,279.0 346.1,283.5 350.3,285.1 354.6,287.2 358.8,290.0 363.0,294.9 367.3,299.6 371.5,304.8 375.7,310.9 379.9,316.8 384.2,323.8 388.4,329.6 392.6,332.7 396.9,336.8 401.1,341.3 405.3,345.1 409.5,347.8 413.8,350.5 418.0,353.0 422.2,354.7 426.5,356.3 430.7,361.2 434.9,366.6 439.2,371.9 443.4,375.4 447.6,378.8 451.8,382.3 456.1,386.7 460.3,392.7 464.5,394.5 468.8,397.1 473.0,400.3 477.2,402.7 481.4,403.3 485.7,402.3 489.9,399.8 494.1,398.6 498.4,396.5 502.6,394.3 506.8,391.1 511.0,388.3 515.3,384.2 519.5,381.1 523.7,378.4 528.0,376.6 532.2,375.8 536.4,373.8 540.6,372.0 544.9,370.1 549.1,366.7 553.3,363.4 557.6,360.6 561.8,356.4 566.0,353.2 570.3,349.7 574.5,347.1 578.7,344.9 582.9,343.5 587.2,343.6 591.4,342.4 595.6,341.1 599.9,339.9 604.1,339.6 608.3,338.9 612.5,337.9 616.8,335.8 621.0,334.0 625.2,332.5 629.5,329.7 633.7,325.7 637.9,321.2 642.1,318.4 646.4,316.1 650.6,312.6 654.8,309.4 659.1,305.4 663.3,299.8 667.5,294.5 671.7,286.9 676.0,281.0 680.2,273.5 684.4,267.8 688.7,262.1 692.9,257.6 697.1,254.7 701.4,252.5 705.6,252.2 709.8,250.3 714.0,250.3 718.3,250.6 722.5,251.5 726.7,252.3 731.0,252.2 735.2,253.3 739.4,254.1 743.6,255.0 747.9,256.5 752.1,258.2 756.3,259.5 760.6,260.9 764.8,260.3 769.0,260.5 773.2,259.9 777.5,258.5 781.7,257.8 785.9,257.7 790.2,257.4 794.4,256.9 798.6,256.8 802.8,257.1 807.1,256.8 811.3,256.3 815.5,256.1 819.8,256.0 824.0,255.5 828.2,253.2 832.4,251.0 836.7,250.0 840.9,249.5 845.1,250.3 849.4,250.7 853.6,250.6 857.8,250.8 862.1,252.7 866.3,254.5 870.5,256.8 874.7,259.0 879.0,261.5 883.2,263.9 887.4,266.6 891.7,269.1 895.9,270.6 900.1,272.1 904.3,273.0 908.6,273.9 912.8,275.0 917.0,276.0 921.3,277.1 925.5,279.5 929.7,281.6 933.9,283.9 938.2,286.1 942.4,288.3 946.6,288.3 950.9,287.4 955.1,284.5 959.3,282.6 963.5,281.1 967.8,279.9 972.0,278.9 976.2,277.9 980.5,276.6 984.7,276.0 988.9,274.8 993.2,274.6 997.4,274.8 1001.6,274.7 1005.8,274.6 1010.1,273.7 1014.3,273.0 1018.5,270.2 1022.8,268.5 1027.0,267.5 1031.2,266.0 1035.4,264.5 1039.7,263.3 1043.9,262.7 1048.1,262.4 1052.4,262.1 1056.6,261.8 1060.8,261.6 1065.0,261.6 1069.3,262.8 1073.5,264.2 1077.7,265.4 1082.0,266.6 1086.2,267.7 1090.4,268.7 1094.6,269.5 1098.9,270.3 1103.1,271.0 1107.3,272.0 1111.6,273.7 1115.8,275.7 1120.0,279.2 1124.2,280.5 1128.5,281.3 1132.7,282.3 1136.9,283.3 1141.2,283.8 1145.4,283.6 1149.6,283.5 1153.9,283.4 1158.1,283.9 1162.3,284.0 1166.5,284.0 1170.8,284.0 1175.0,284.8 1179.2,285.9 1183.5,287.7 1187.7,289.1 1191.9,289.2 1196.1,289.7 1200.4,290.1 1204.6,290.4 1208.8,291.2 1213.1,292.0 1217.3,292.1 1221.5,292.3 1225.7,293.2 1230.0,293.2 1234.2,293.2 1238.4,293.3 1242.7,293.6 1246.9,295.2 1251.1,296.9 1255.3,298.4 1259.6,298.1 1263.8,297.8 1268.0,298.6 1272.3,299.8 1276.5,300.8 1280.7,301.9 1285.0,302.8 1289.2,303.6 1293.4,304.5 1297.6,305.2 1301.9,304.0 1306.1,303.1 1310.3,302.3 1314.6,301.4 1318.8,298.6 1323.0,296.1 1327.2,294.9 1331.5,294.4 1335.7,293.2 1339.9,292.3 1344.2,292.1 1348.4,291.8 1352.6,291.6 1356.8,291.5 1361.1,291.8 1365.3,291.9 1369.5,291.6 1373.8,290.9 1378.0,290.2 1382.2,287.0 1386.4,283.2 1390.7,279.7 1394.9,276.7 1399.1,274.2 1403.4,271.8 1407.6,267.7 1411.8,263.1 1416.1,258.8 1420.3,255.6 1424.5,252.7 1428.7,250.5 1433.0,249.1 1437.2,247.8 1441.4,246.6 1445.7,245.9 1449.9,245.2 1454.1,245.1 1458.3,245.1 1462.6,246.6 1466.8,248.5 1471.0,249.4 1475.3,250.3 1479.5,252.1 1483.7,254.3 1487.9,255.6 1492.2,256.0 1496.4,256.2 1500.6,257.7 1504.9,259.8 1509.1,262.3 1513.3,263.4 1517.5,267.0 1521.8,269.4 1526.0,271.2 1530.2,272.7 1534.5,274.2 1538.7,275.6 1542.9,277.1 1547.2,278.2 1551.4,279.3 1555.6,280.0 1559.8,283.0 1564.1,284.6 1568.3,286.1 1572.5,287.1 1576.8,287.7 1581.0,288.3 1585.2,289.4 1589.4,290.3 1593.7,291.2 1597.9,291.6 1602.1,291.6 1606.4,291.5 1610.6,290.1 1614.8,288.6 1619.0,287.3 1623.3,287.1 1627.5,287.8 1631.7,289.2 1636.0,288.5 1640.2,288.3 1644.4,288.0 1648.6,287.5 1652.9,286.8 1657.1,286.7 1661.3,286.5 1665.6,286.3 1669.8,286.1 1674.0,285.2 1678.2,282.9 1682.5,281.8 1686.7,281.0 1690.9,280.3 1695.2,279.6 1699.4,279.6 1703.6,278.9 1707.9,278.3 1712.1,276.3" fill="none" stroke="#00ee00" stroke-width="1" shape-rendering="crispEdges"/>
<polyline points="67.0,107.3 71.2,118.9 75.5,127.4 79.7,135.7 83.9,135.0 88.1,136.1 92.4,137.5 96.6,141.3 100.8,145.4 105.1,148.7 109.3,151.6 113.5,151.6 117.7,151.6 122.0,151.8 126.2,156.7 130.4,167.1 134.7,170.7 138.9,178.6 143.1,183.3 147.4,185.6 151.6,187.0 155.8,184.3 160.0,183.3 164.3,182.6 168.5,180.2 172.7,177.1 177.0,176.1 181.2,175.1 185.4,174.2 189.6,172.1 193.9,172.0 198.1,171.8 202.3,173.9 206.6,175.6 210.8,180.8 215.0,184.2 219.2,191.2 223.5,197.1 227.7,201.1 231.9,203.8 236.2,206.0 240.4,209.4 244.6,209.2 248.8,208.8 253.1,207.5 257.3,207.6 261.5,208.2 265.8,210.0 270.0,210.8 274.2,213.8 278.5,216.5 282.7,218.5 286.9,217.8 291.1,218.6 295.4,219.3 299.6,220.7 303.8,228.6 308.1,236.8 312.3,240.6 316.5,257.0 320.7,271.8 325.0,287.4 329.2,295.3 333.4,302.8 337.7,306.5 341.9,306.7 346.1,310.4 350.3,308.4 354.6,308.4 358.8,309.8 363.0,315.5 367.3,320.9 371.5,327.0 375.7,334.6 379.9,341.7 384.2,350.5 388.4,356.6 392.6,357.7 396.9,361.0 401.1,365.3 405.3,368.1 409.5,369.1 413.8,370.5 418.0,371.7 422.2,371.4 426.5,371.5 430.7,378.2 434.9,385.4 439.2,392.0 443.4,395.1 447.6,398.0 451.8,401.2 456.1,406.3 460.3,414.2 464.5,413.7 468.8,415.2 473.0,418.1 477.2,419.4 481.4,417.5 485.7,413.0 489.9,406.4 494.1,402.8 498.4,398.0 502.6,393.6 506.8,387.4 511.0,382.8 515.3,375.9 519.5,371.5 523.7,368.2 528.0,366.5 532.2,366.7 536.4,364.6 540.6,362.8 544.9,361.0 549.1,356.0 553.3,351.7 557.6,348.4 561.8,342.5 566.0,338.9 570.3,334.8 574.5,332.6 578.7,331.0 582.9,330.8 587.2,333.4 591.4,332.9 595.6,332.2 599.9,331.5 604.1,332.5 608.3,332.4 612.5,331.6 616.8,328.8 621.0,326.7 625.2,325.1 629.5,321.0 633.7,315.1 637.9,308.4 642.1,305.2 646.4,303.4 650.6,299.0 654.8,295.3 659.1,290.2 663.3,282.2 667.5,275.3 671.7,264.1 676.0,257.0 680.2,247.0 684.4,241.0 688.7,234.9 692.9,231.1 697.1,230.4 701.4,230.7 705.6,234.0 709.8,233.8 714.0,236.7 718.3,239.7 722.5,243.5 726.7,246.5 731.0,247.3 735.2,250.3 739.4,252.5 743.6,254.5 747.9,257.5 752.1,260.5 756.3,262.6 760.6,264.8 764.8,262.8 769.0,262.7 773.2,261.1 777.5,258.3 781.7,256.9 785.9,256.9 790.2,256.5 794.4,255.7 798.6,255.8 802.8,256.5 807.1,256.0 811.3,255.3 815.5,255.1 819.8,255.1 824.0,254.3 828.2,250.0 832.4,246.3 836.7,245.4 840.9,245.3 845.1,247.4 849.4,248.7 853.6,249.1 857.8,249.7 862.1,253.5 866.3,256.9 870.5,260.8 874.7,264.3 879.0,268.0 883.2,271.4 887.4,275.2 891.7,278.4 895.9,279.7 900.1,280.9 904.3,281.1 908.6,281.3 912.8,282.0 917.0,282.7 921.3,283.6 925.5,287.0 929.7,289.7 933.9,292.7 938.2,295.2 942.4,297.8 946.6,296.0 950.9,292.8 955.1,286.4 959.3,282.3 963.5,279.5 967.8,277.6 972.0,276.1 976.2,274.6 980.5,272.7 984.7,272.4 988.9,270.7 993.2,271.1 997.4,272.0 1001.6,272.4 1005.8,272.7 1010.1,271.2 1014.3,270.2 1018.5,265.4 1022.8,263.1 1027.0,262.2 1031.2,260.2 1035.4,258.3 1039.7,257.3 1043.9,257.2 1048.1,257.6 1052.4,257.8 1056.6,258.1 1060.8,258.4 1065.0,259.1 1069.3,261.8 1073.5,264.7 1077.7,266.8 1082.0,268.8 1086.2,270.6 1090.4,272.0 1094.6,272.9 1098.9,273.8 1103.1,274.6 1107.3,275.8 1111.6,278.4 1115.8,281.4 1120.0,287.0 1124.2,288.0 1128.5,288.2 1132.7,288.8 1136.9,289.5 1141.2,289.5 1145.4,288.1 1149.6,287.0 1153.9,286.1 1158.1,286.6 1162.3,286.3 1166.5,285.9 1170.8,285.7 1175.0,286.8 1179.2,288.7 1183.5,291.4 1187.7,293.5 1191.9,292.9 1196.1,293.1 1200.4,293.3 1204.6,293.3 1208.8,294.3 1213.1,295.2 1217.3,295.0 1221.5,294.7 1225.7,296.1 1230.0,295.5 1234.2,295.1 1238.4,295.0 1242.7,295.2 1246.9,298.1 1251.1,300.8 1255.3,302.9 1259.6,301.6 1263.8,300.3 1268.0,301.3 1272.3,303.2 1276.5,304.5 1280.7,305.9 1285.0,306.9 1289.2,307.8 1293.4,308.6 1297.6,309.3 1301.9,306.2 1306.1,304.1 1310.3,302.4 1314.6,300.7 1318.8,295.4 1323.0,291.2 1327.2,289.8 1331.5,289.7 1335.7,288.3 1339.9,287.4 1344.2,287.9 1348.4,288.2 1352.6,288.4 1356.8,288.8 1361.1,289.8 1365.3,290.5 1369.5,290.2 1373.8,289.0 1378.0,288.0 1382.2,282.4 1386.4,275.8 1390.7,270.5 1394.9,266.5 1399.1,263.4 1403.4,260.8 1407.6,255.1 1411.8,248.4 1416.1,243.0 1420.3,239.7 1424.5,236.9 1428.7,235.7 1433.0,235.6 1437.2,235.6 1441.4,235.5 1445.7,236.2 1449.9,236.6 1454.1,238.0 1458.3,239.2 1462.6,243.2 1466.8,247.5 1471.0,249.5 1475.3,251.2 1479.5,254.5 1483.7,258.1 1487.9,259.9 1492.2,260.1 1496.4,259.7 1500.6,261.8 1504.9,265.2 1509.1,268.9 1513.3,269.9 1517.5,275.6 1521.8,278.6 1526.0,280.4 1530.2,281.6 1534.5,282.8 1538.7,283.9 1542.9,285.3 1547.2,286.0 1551.4,286.6 1555.6,286.6 1559.8,291.1 1564.1,292.7 1568.3,294.2 1572.5,294.5 1576.8,294.5 1581.0,294.4 1585.2,295.2 1589.4,295.9 1593.7,296.6 1597.9,296.5 1602.1,295.5 1606.4,294.7 1610.6,291.4 1614.8,288.3 1619.0,285.8 1623.3,285.7 1627.5,287.4 1631.7,290.0 1636.0,288.6 1640.2,288.2 1644.4,287.7 1648.6,286.7 1652.9,285.6 1657.1,285.5 1661.3,285.3 1665.6,285.2 1669.8,285.1 1674.0,283.6 1678.2,279.4 1682.5,277.9 1686.7,277.0 1690.9,276.5 1695.2,275.9 1699.4,276.6 1703.6,275.6 1707.9,275.2 1712.1,271.9" fill="none" stroke="#f4c0b8" stroke-width="1" shape-rendering="crispEdges"/>
<defs><linearGradient id="tg" x1="0" y1="0" x2="0" y2="1"><stop offset="0" stop-color="#ffb0b0"/><stop offset="0.35" stop-color="#ff4a40"/><stop offset="1" stop-color="#ff2a14"/></linearGradient></defs>
<path d="M1719,256.5 L1725.5,250 L1758.5,250 L1762,253.5 L1762,259.5 L1759,263 L1725.5,263 Z" fill="url(#tg)" shape-rendering="auto"/>
<text x="1729.5" y="259.7" fill="#000" font-size="10.5" letter-spacing="0.3" font-family="Liberation Sans">6.83</text>
<g shape-rendering="auto"><line x1="161.5" y1="350.5" x2="211" y2="241" stroke="#4e7a30" stroke-width="3"/><path d="M217.5,229 L204,239.5 L219.5,245.5 Z" fill="#4e7a30"/><line x1="357" y1="153" x2="270" y2="193" stroke="#e02a1a" stroke-width="3"/><path d="M254,200 L268,185 L274,200 Z" fill="#e02a1a"/></g>
</svg><svg class="abs" style="left:1620px;top:0" width="157" height="26"><defs><linearGradient id="bg" x1="0" y1="0" x2="0" y2="1"><stop offset="0" stop-color="#939aa5"/><stop offset="1" stop-color="#6c737e"/></linearGradient></defs><rect x="4.5" y="4.5" width="51" height="16" rx="2" ry="2" fill="url(#bg)" stroke="#000" stroke-width="1"/><path d="M5.5,19.5 L5.5,5.5 L54,5.5" fill="none" stroke="#d8dce2" stroke-width="1"/><rect x="40.5" y="5" width="1" height="15" fill="#5a606a"/><rect x="41.5" y="5" width="1" height="15" fill="#b0b6be"/><text x="9" y="16" font-family="Liberation Sans" font-weight="bold" font-size="8" fill="#222" letter-spacing="0.8">SETUP</text><text x="8" y="15" font-family="Liberation Sans" font-weight="bold" font-size="8" fill="#fff" letter-spacing="0.8">SETUP</text><path d="M43,10 L52,10 L47.5,16 Z" fill="#fff"/><rect x="58.5" y="4.5" width="16" height="16" rx="2" ry="2" fill="url(#bg)" stroke="#000" stroke-width="1"/><path d="M59.5,19.5 L59.5,5.5 L73,5.5" fill="none" stroke="#d8dce2" stroke-width="1"/><rect x="77.5" y="4.5" width="16" height="16" rx="2" ry="2" fill="url(#bg)" stroke="#000" stroke-width="1"/><path d="M78.5,19.5 L78.5,5.5 L92,5.5" fill="none" stroke="#d8dce2" stroke-width="1"/><rect x="96.5" y="4.5" width="16" height="16" rx="2" ry="2" fill="url(#bg)" stroke="#000" stroke-width="1"/><path d="M97.5,19.5 L97.5,5.5 L111,5.5" fill="none" stroke="#d8dce2" stroke-width="1"/><rect x="115.5" y="4.5" width="16" height="16" rx="2" ry="2" fill="url(#bg)" stroke="#000" stroke-width="1"/><path d="M116.5,19.5 L116.5,5.5 L130,5.5" fill="none" stroke="#d8dce2" stroke-width="1"/><rect x="134.5" y="4.5" width="16" height="16" rx="2" ry="2" fill="url(#bg)" stroke="#000" stroke-width="1"/><path d="M135.5,19.5 L135.5,5.5 L149,5.5" fill="none" stroke="#d8dce2" stroke-width="1"/><rect x="64" y="7" width="6" height="5" fill="#fff"/><rect x="65" y="9" width="4" height="1" fill="#444"/><rect x="62" y="13" width="10" height="4" rx="1" fill="#fff"/><rect x="63" y="14" width="1" height="1" fill="#666"/><text x="85.5" y="17" text-anchor="middle" font-family="Liberation Sans" font-weight="bold" font-size="12" fill="#fff">?</text><rect x="100" y="14" width="7" height="2" fill="#fff"/><rect x="119" y="8" width="9" height="9" fill="none" stroke="#fff" stroke-width="1"/><rect x="118.5" y="7" width="10.5" height="3" fill="#fff"/><rect x="118.5" y="7" width="1.5" height="11" fill="#fff"/><rect x="127.5" y="7" width="1.5" height="11" fill="#fff"/><rect x="118.5" y="16.5" width="10.5" height="1.5" fill="#fff"/><path d="M138.5,8.5 L146.5,16.5 M146.5,8.5 L138.5,16.5" stroke="#fff" stroke-width="2"/></svg><svg class="abs" style="left:1208px;top:26px" width="45" height="22"><path d="M4,16 L8,12" stroke="#c8641e" stroke-width="2.5" stroke-linecap="round"/><circle cx="11.5" cy="8.5" r="4.5" fill="#fff" stroke="#2244aa" stroke-width="1.5"/><path d="M11.5,6 L11.5,11 M9,8.5 L14,8.5" stroke="#000" stroke-width="2"/><rect x="22" y="6" width="6" height="6" fill="#a8d0ec"/><path d="M25,16 L29,12" stroke="#f0c0a0" stroke-width="2" stroke-linecap="round"/><circle cx="32" cy="8.5" r="4.5" fill="#f4f8fc" stroke="#b8d4ec" stroke-width="1.5"/></svg>
</div></body></html>
